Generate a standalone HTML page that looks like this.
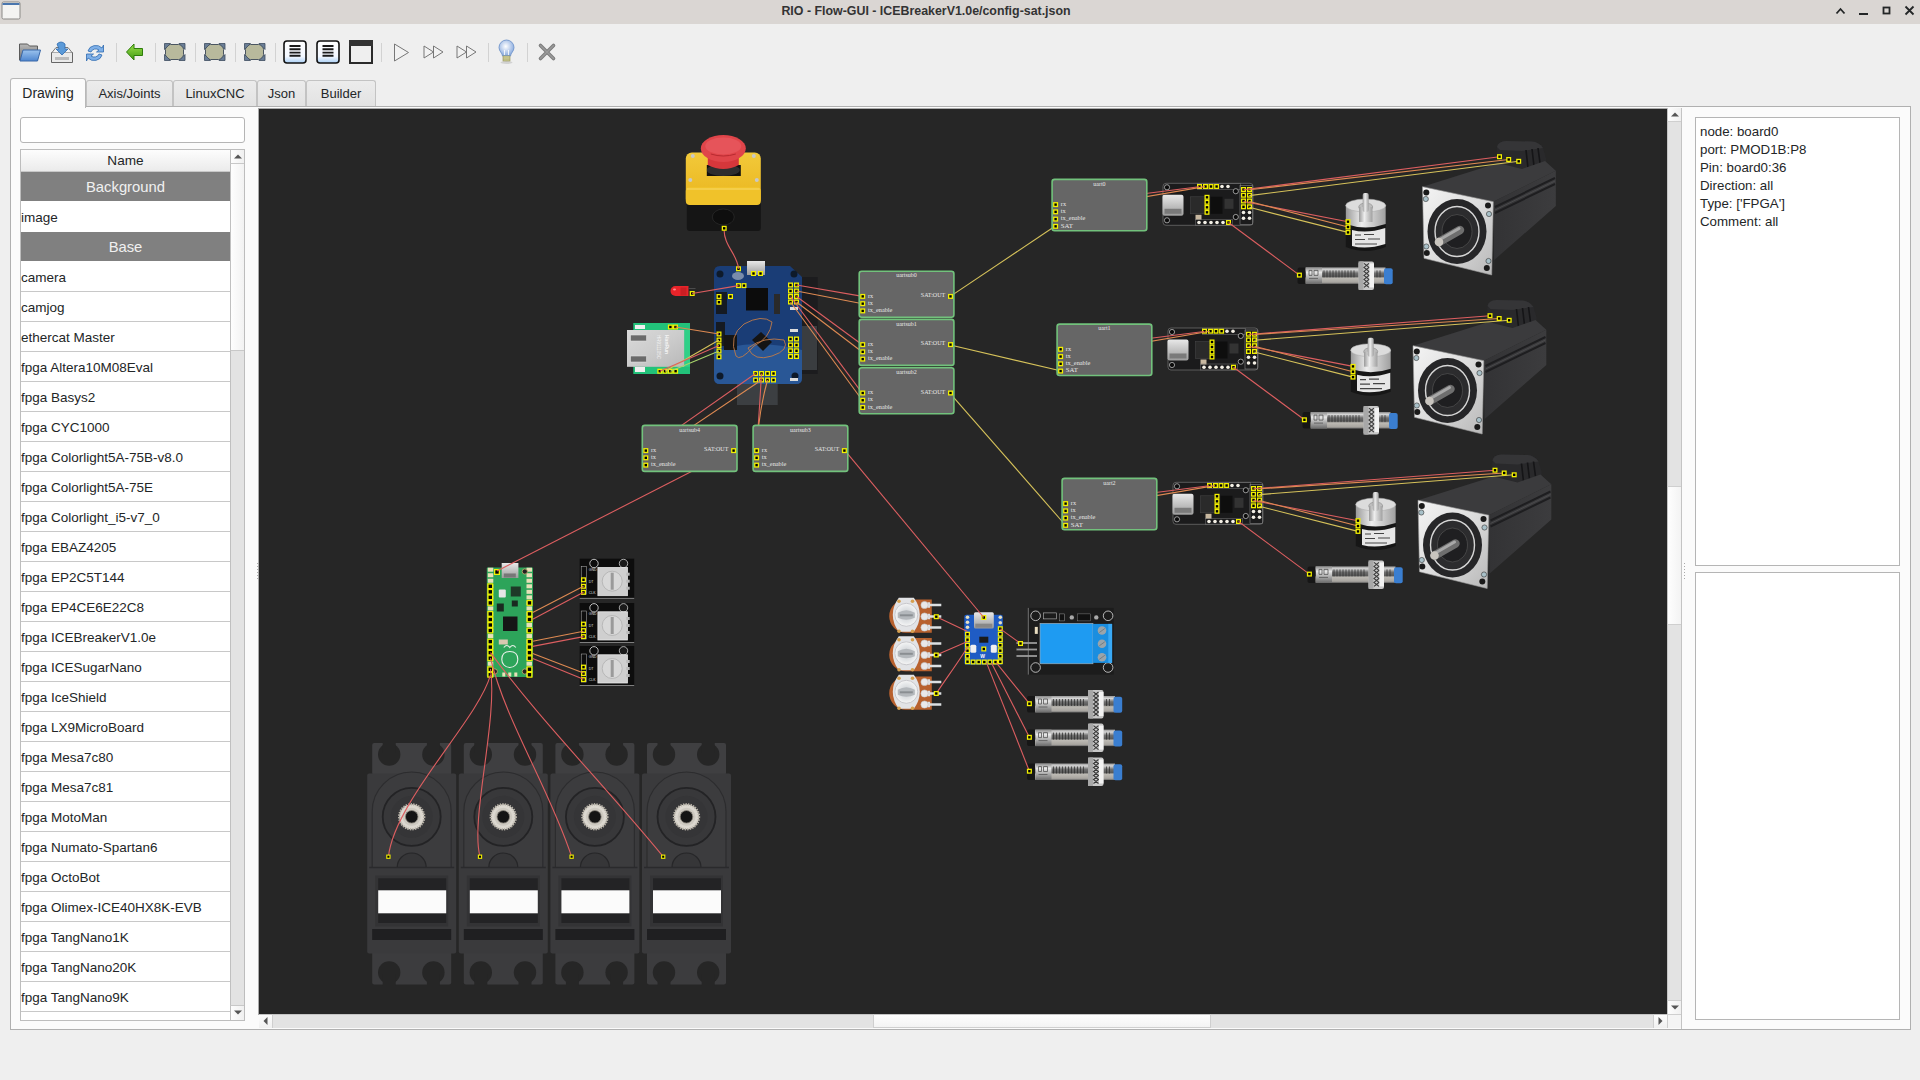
<!DOCTYPE html>
<html><head><meta charset="utf-8">
<style>
*{margin:0;padding:0;box-sizing:border-box}
html,body{width:1920px;height:1080px;overflow:hidden;background:#efefef;font-family:"Liberation Sans",sans-serif;color:#232627}
.a{position:absolute}
#title{left:0;top:0;width:1920px;height:24px;background:#dad6d3}
#ttext{left:0;top:0;width:1852px;text-align:center;font-size:12.4px;line-height:22px;font-weight:bold;color:#333}
.tab{top:80px;height:27px;background:linear-gradient(#ececec,#e2e2e2);border:1px solid #c3c3c3;border-bottom:none;font-size:13px;line-height:26px;text-align:center;color:#232627;border-radius:3px 3px 0 0}
#panel{left:10px;top:106px;width:1901px;height:924px;background:#fbfbfb;border:1px solid #b0b0b0}
.sep{top:43px;width:1px;height:20px;background:#d4d4d4}
#search{left:20px;top:117px;width:225px;height:26px;background:#fff;border:1px solid #b5b5b5;border-radius:3px}
#table{left:20px;top:149px;width:225px;height:872px;background:#fff;border:1px solid #bdbdbd;overflow:hidden}
.row{position:absolute;left:0;width:209px;height:30px;border-bottom:1px solid #c8c8c8;font-size:13.5px;line-height:32px;padding-left:0;color:#232627;background:#fff}
.grp{background:#808080;color:#f0f0f0;text-align:center;font-size:14.8px;line-height:31px;border-bottom:1px solid #fff}
#canvas{left:258px;top:108px;width:1410px;height:907px;background:#262626;border:1px solid #aaa;border-right:none;border-bottom:none;overflow:hidden}
.hdr{position:absolute;left:0;top:0;width:209px;height:22px;background:linear-gradient(#fdfdfd,#ebebeb);border-bottom:1px solid #c8c8c8;text-align:center;font-size:13.6px;line-height:22px;color:#232627}
#info{left:1695px;top:117px;width:205px;height:449px;background:#fff;border:1px solid #b5b5b5;font-size:13.3px;line-height:18px;padding:5px 0 0 4px;color:#232627}
#info2{left:1695px;top:572px;width:205px;height:448px;background:#fff;border:1px solid #b5b5b5}
.sb{background:#e3e3e3}
.btn{background:linear-gradient(90deg,#fdfdfd,#f0f0f0)}
</style></head><body>
<div id="title" class="a">
  <svg class="a" style="left:0;top:0" width="24" height="24"><rect x="2" y="2" width="18" height="17" rx="1.5" fill="#f4f4f2" stroke="#8a8986" stroke-width="1"/><rect x="2.5" y="3" width="17" height="2" fill="#4a76ae"/></svg>
  <div id="ttext" class="a">RIO - Flow-GUI - ICEBreakerV1.0e/config-sat.json</div>
  <svg class="a" style="left:1830px;top:0" width="90" height="24">
    <path d="M6.5 13.5 L10.5 9 L14.5 13.5" stroke="#232627" stroke-width="1.8" fill="none"/>
    <rect x="29" y="13" width="9" height="2" fill="#232627"/>
    <rect x="53.5" y="7.5" width="6" height="6" stroke="#232627" stroke-width="1.8" fill="none"/>
    <path d="M75.5 6.5 L83.5 14.5 M83.5 6.5 L75.5 14.5" stroke="#232627" stroke-width="1.8" fill="none"/>
  </svg>
</div>
<!-- TOOLBAR -->
<svg class="a" style="left:0;top:24px" width="580" height="56">
<defs>
<linearGradient id="gfold" x1="0" y1="0" x2="0" y2="1"><stop offset="0" stop-color="#b9b9b9"/><stop offset="1" stop-color="#6f6f6f"/></linearGradient>
<linearGradient id="gblue" x1="0" y1="0" x2="0" y2="1"><stop offset="0" stop-color="#9cc3ee"/><stop offset="1" stop-color="#4e86cf"/></linearGradient>
<linearGradient id="ggreen" x1="0" y1="0" x2="0" y2="1"><stop offset="0" stop-color="#9be04a"/><stop offset="1" stop-color="#3f9a12"/></linearGradient>
<linearGradient id="gdoc" x1="0" y1="0" x2="0" y2="1"><stop offset="0" stop-color="#ffffff"/><stop offset="0.7" stop-color="#f4f8ff"/><stop offset="1" stop-color="#a9cff5"/></linearGradient>
<radialGradient id="gbulb" cx="0.45" cy="0.4" r="0.6"><stop offset="0" stop-color="#ffffff"/><stop offset="1" stop-color="#87a9de"/></radialGradient>
</defs>
<!-- folder -->
<path d="M19.5 20 h8 l2 2 h8 v14 h-18z" fill="url(#gfold)" stroke="#5a5a5a" stroke-width="1"/>
<path d="M20 37 l3 -11 h17.5 l-3 11z" fill="url(#gblue)" stroke="#3a68a8" stroke-width="1"/>
<!-- save -->
<path d="M51.5 28.5 h21 v10 h-21z" fill="#eaeaea" stroke="#666" stroke-width="1"/>
<path d="M52 28.5 l4 -5 h12 l4 5" fill="#f4f4f4" stroke="#777" stroke-width="1"/>
<rect x="55" y="33" width="14" height="3" fill="#bbb"/>
<path d="M57 20 q4 -4 8 0 v5 h3 l-6 6 l-6 -6 h3z" fill="#5b9ad8" stroke="#2f6bb0" stroke-width="0.8"/>
<!-- refresh -->
<path d="M88 27 a8 7 0 0 1 14 -3 l1.5 -3 v7 h-7 l2.5 -2 a5 4.5 0 0 0 -8 2z" fill="#7fb0e8" stroke="#2f6bb0" stroke-width="0.8"/>
<path d="M102 31 a8 7 0 0 1 -14 3 l-1.5 3 v-7 h7 l-2.5 2 a5 4.5 0 0 0 8 -2z" fill="#7fb0e8" stroke="#2f6bb0" stroke-width="0.8"/>
<rect x="116" y="19" width="1" height="19" fill="#d2d2d2"/>
<!-- green arrow -->
<path d="M126.5 28 l7.5 -8 v4.5 h8.5 v7 h-8.5 v4.5z" fill="url(#ggreen)" stroke="#2e7d0a" stroke-width="1"/>
<rect x="155" y="19" width="1" height="19" fill="#d2d2d2"/>
<!-- 3 shape icons -->
<g id="shp"><rect x="165.5" y="20.5" width="18" height="15" rx="5" fill="#b8b99c" stroke="#4a5560" stroke-width="1"/>
<path d="M164.5 19.5 h6 l-6 6z M185 19.5 h-6 l6 6z M164.5 36.5 h6 l-6 -6z M185 36.5 h-6 l6 -6z" fill="#6a7d95" stroke="#3e4d60" stroke-width="0.8" stroke-linejoin="round"/></g>
<rect x="195" y="19" width="1" height="19" fill="#d2d2d2"/>
<use href="#shp" x="40"/>
<rect x="235" y="19" width="1" height="19" fill="#d2d2d2"/>
<use href="#shp" x="80"/>
<rect x="275" y="19" width="1" height="19" fill="#d2d2d2"/>
<!-- doc icons -->
<rect x="284" y="17" width="22" height="22" rx="3" fill="url(#gdoc)" stroke="#111" stroke-width="1.6"/>
<path d="M289.5 22 h11 M289.5 25.3 h11 M289.5 28.6 h11 M289.5 31.8 h11" stroke="#1a1a1a" stroke-width="1.9"/>
<rect x="317" y="17" width="22" height="22" rx="3" fill="url(#gdoc)" stroke="#111" stroke-width="1.6"/>
<path d="M322.5 22 h11 M322.5 25.3 h11 M322.5 28.6 h11 M322.5 31.8 h11" stroke="#1a1a1a" stroke-width="1.9"/>
<rect x="350" y="17" width="22" height="22" fill="#efefef" stroke="#2b2b2b" stroke-width="2"/>
<rect x="349" y="16" width="24" height="6" fill="#333"/>
<rect x="381" y="19" width="1" height="19" fill="#d2d2d2"/>
<!-- play -->
<path d="M394.5 20 l14 8.5 l-14 8.5z" fill="#f2f2f2" stroke="#777" stroke-width="1"/>
<path d="M424 22 l9.5 6 l-9.5 6z M433.5 22 l9.5 6 l-9.5 6z" fill="#f2f2f2" stroke="#777" stroke-width="1"/>
<path d="M457 22 l9.5 6 l-9.5 6z M466.5 22 l9.5 6 l-9.5 6z" fill="#f2f2f2" stroke="#777" stroke-width="1"/>
<rect x="488" y="19" width="1" height="19" fill="#d2d2d2"/>
<!-- bulb -->
<ellipse cx="506.5" cy="38.5" rx="6" ry="1.5" fill="#000" opacity="0.12"/>
<path d="M502.5 32 C502.5 29 499 27.5 499 23.5 A7.5 7.5 0 0 1 514 23.5 C514 27.5 510.5 29 510.5 32 Z" fill="url(#gbulb)" stroke="#7396cc" stroke-width="0.9"/>
<path d="M504.5 26 v5 M508.5 26 v5" stroke="#fff" stroke-width="0.8"/>
<rect x="503" y="32" width="7" height="5" fill="#d9d8a0" stroke="#8f8c50" stroke-width="0.6"/>
<path d="M503 34 h7 M503 35.8 h7" stroke="#9a9860" stroke-width="0.6"/>
<rect x="527" y="19" width="1" height="19" fill="#d2d2d2"/>
<!-- X -->
<path d="M540.5 21.5 l13 13 M553.5 21.5 l-13 13" stroke="#7b7b7b" stroke-width="3.6" stroke-linecap="round"/>
<path d="M540.5 21.5 l13 13 M553.5 21.5 l-13 13" stroke="#9a9a9a" stroke-width="1.6" stroke-linecap="round"/>
</svg>
<!-- TABS -->
<div class="a tab" style="left:86px;width:87px">Axis/Joints</div>
<div class="a tab" style="left:173px;width:84px">LinuxCNC</div>
<div class="a tab" style="left:257px;width:49px">Json</div>
<div class="a tab" style="left:306px;width:70px">Builder</div>
<div id="panel" class="a"></div>
<div class="a tab" style="left:10px;top:78px;width:76px;height:30px;background:#fbfbfb;border-color:#b8b8b8;line-height:29px;font-size:14px">Drawing</div>
<div id="search" class="a"></div>
<div id="table" class="a">
<div class="hdr">Name</div>
<div class="row grp" style="top:22px">Background</div>
<div class="row" style="top:52px;border-bottom:none">image</div>
<div class="row grp" style="top:82px">Base</div>
<div class="row" style="top:112px">camera</div>
<div class="row" style="top:142px">camjog</div>
<div class="row" style="top:172px">ethercat Master</div>
<div class="row" style="top:202px">fpga Altera10M08Eval</div>
<div class="row" style="top:232px">fpga Basys2</div>
<div class="row" style="top:262px">fpga CYC1000</div>
<div class="row" style="top:292px">fpga Colorlight5A-75B-v8.0</div>
<div class="row" style="top:322px">fpga Colorlight5A-75E</div>
<div class="row" style="top:352px">fpga Colorlight_i5-v7_0</div>
<div class="row" style="top:382px">fpga EBAZ4205</div>
<div class="row" style="top:412px">fpga EP2C5T144</div>
<div class="row" style="top:442px">fpga EP4CE6E22C8</div>
<div class="row" style="top:472px">fpga ICEBreakerV1.0e</div>
<div class="row" style="top:502px">fpga ICESugarNano</div>
<div class="row" style="top:532px">fpga IceShield</div>
<div class="row" style="top:562px">fpga LX9MicroBoard</div>
<div class="row" style="top:592px">fpga Mesa7c80</div>
<div class="row" style="top:622px">fpga Mesa7c81</div>
<div class="row" style="top:652px">fpga MotoMan</div>
<div class="row" style="top:682px">fpga Numato-Spartan6</div>
<div class="row" style="top:712px">fpga OctoBot</div>
<div class="row" style="top:742px">fpga Olimex-ICE40HX8K-EVB</div>
<div class="row" style="top:772px">fpga TangNano1K</div>
<div class="row" style="top:802px">fpga TangNano20K</div>
<div class="row" style="top:832px">fpga TangNano9K</div>
<div class="row" style="top:862px"></div>
<div class="a" style="left:209px;top:0;width:14px;height:870px;background:#e3e3e3;border-left:1px solid #c0c0c0"></div>
<div class="a" style="left:209px;top:0;width:14px;height:14px;background:linear-gradient(90deg,#fdfdfd,#f0f0f0);border-left:1px solid #c0c0c0;border-bottom:1px solid #c8c8c8"><svg class="a" style="left:3px;top:4px" width="8" height="5"><path d="M0 4.5 L4 0.5 L8 4.5Z" fill="#555"/></svg></div>
<div class="a" style="left:209px;top:14px;width:14px;height:187px;background:linear-gradient(90deg,#fefefe,#f2f2f2);border-left:1px solid #c0c0c0;border-bottom:1px solid #c8c8c8"></div>
<div class="a" style="left:209px;top:855px;width:14px;height:15px;background:linear-gradient(90deg,#fdfdfd,#f0f0f0);border-left:1px solid #c0c0c0;border-top:1px solid #c8c8c8"><svg class="a" style="left:3px;top:4px" width="8" height="5"><path d="M0 0.5 L4 4.5 L8 0.5Z" fill="#555"/></svg></div>
</div>
<div id="canvas" class="a"></div>
<svg class="a" style="left:259px;top:109px" width="1408" height="905" viewBox="259 109 1408 905">
<defs>
<linearGradient id="silv" x1="0" y1="0" x2="1" y2="1"><stop offset="0" stop-color="#f4f4f4"/><stop offset="0.5" stop-color="#dcdcdc"/><stop offset="1" stop-color="#b8b8b8"/></linearGradient>
<linearGradient id="silvV" x1="0" y1="0" x2="0" y2="1"><stop offset="0" stop-color="#8a8a8a"/><stop offset="0.3" stop-color="#e8e8e8"/><stop offset="0.6" stop-color="#b0b0b0"/><stop offset="1" stop-color="#6a6a6a"/></linearGradient>
<linearGradient id="silvH" x1="0" y1="0" x2="1" y2="0"><stop offset="0" stop-color="#9a9a9a"/><stop offset="0.4" stop-color="#eeeeee"/><stop offset="1" stop-color="#a0a0a0"/></linearGradient>
<linearGradient id="usb" x1="0" y1="0" x2="0" y2="1"><stop offset="0" stop-color="#e8e8e8"/><stop offset="1" stop-color="#9c9c9c"/></linearGradient>
<linearGradient id="yellowbox" x1="0" y1="0" x2="0" y2="1"><stop offset="0" stop-color="#f2c93a"/><stop offset="1" stop-color="#e9b51d"/></linearGradient>
<linearGradient id="motside" x1="0" y1="0" x2="1" y2="0"><stop offset="0" stop-color="#333335"/><stop offset="1" stop-color="#3c3c3e"/></linearGradient>
<linearGradient id="proxg" x1="0" y1="0" x2="0" y2="1"><stop offset="0" stop-color="#9a9a9a"/><stop offset="0.15" stop-color="#d6d6d6"/><stop offset="0.35" stop-color="#707070"/><stop offset="0.55" stop-color="#5a5a5a"/><stop offset="0.65" stop-color="#bdbab4"/><stop offset="0.9" stop-color="#a8a5a0"/><stop offset="1" stop-color="#6a6a6a"/></linearGradient>
<radialGradient id="gear" cx="0.5" cy="0.5" r="0.5"><stop offset="0.4" stop-color="#222"/><stop offset="0.5" stop-color="#d8d2c8"/><stop offset="1" stop-color="#a8a298"/></radialGradient>
<radialGradient id="potknob" cx="0.5" cy="0.5" r="0.5"><stop offset="0" stop-color="#c8ccd0"/><stop offset="0.7" stop-color="#e6e8ea"/><stop offset="1" stop-color="#f6f6f6"/></radialGradient>
</defs>
<g transform="translate(685.8,135)">
<rect x="1" y="66" width="74" height="30" rx="3" fill="#151515"/>
<ellipse cx="37.5" cy="82" rx="11" ry="8" fill="#0e0e0e" stroke="#2a2a2a" stroke-width="0.8"/>
<rect x="0" y="17.5" width="75" height="52.5" rx="6" fill="url(#yellowbox)"/>
<rect x="0" y="52" width="75" height="18" rx="4" fill="#f0c22a"/>
<path d="M1,54 H74" stroke="#f8da6a" stroke-width="1"/>
<circle cx="7" cy="21" r="2" fill="#c8c8c8"/><circle cx="68" cy="21" r="2" fill="#c8c8c8"/><circle cx="4.5" cy="45" r="2" fill="#c8c8c8"/><circle cx="71" cy="45" r="2" fill="#c8c8c8"/>
<rect x="21" y="30" width="34" height="11" fill="#111"/>
<ellipse cx="37.5" cy="35" rx="16.5" ry="6" fill="#2e2e2e"/>
<path d="M22,14 L22,30 Q37.5,38 53,30 L53,14 Z" fill="#d6373b"/>
<ellipse cx="37.5" cy="13.5" rx="22.5" ry="13.5" fill="#e0454a"/>
<ellipse cx="37.5" cy="11" rx="18" ry="8.5" fill="#e6545a"/>
<path d="M25,19 Q37.5,23 50,19" stroke="#b82a30" stroke-width="1" fill="none"/>
</g>
<g transform="translate(714,266)">
<rect x="83" y="11" width="20.7" height="97" fill="#1c1c1e"/>
<rect x="84" y="60" width="19" height="44" fill="#3a3d40"/>
<rect x="23" y="110" width="40.7" height="29" fill="#3c3f42"/>
<path d="M6,0 H76 L88,11 V112 Q88,118 82,118 H6 Q0,118 0,112 V6 Q0,0 6,0 Z" fill="#1a3d76"/>
<path d="M0,88 Q30,70 88,84 V112 Q88,118 82,118 H6 Q0,118 0,112 Z" fill="#2d5c9c" opacity="0.85"/>
<rect x="2" y="26" width="11" height="22" fill="#151a22"/>
<rect x="2" y="56" width="9" height="24" fill="#151a22"/>
<rect x="10" y="69" width="13" height="15" fill="#151515"/>
<rect x="33" y="-5" width="18" height="14" fill="url(#usb)"/>
<rect x="32" y="22" width="22" height="22.5" fill="#0c0c0c"/>
<rect x="60" y="28" width="6" height="20" fill="#2a2a2a"/>
<path d="M38,74 L47,66 L58,76 L49,85 Z" fill="#141414"/>
<path d="M22,90 Q14,70 30,58 Q48,48 58,56 Q56,72 40,80 Q26,96 22,90 Z" fill="none" stroke="#c07a48" stroke-width="0.9"/>
<path d="M34,82 Q50,70 70,74 Q76,84 58,90 Q40,96 34,82 Z" fill="none" stroke="#c07a48" stroke-width="0.9"/>
<circle cx="6" cy="8" r="3.5" fill="#0e1a2a"/><circle cx="80" cy="8" r="3.5" fill="#0e1a2a"/><circle cx="6" cy="110" r="3.5" fill="#0e1a2a"/><circle cx="81" cy="110" r="3.5" fill="#0e1a2a"/>
<ellipse cx="24" cy="10" rx="6" ry="4" fill="#c8d0d8" opacity="0.55"/>
<rect x="76" y="63" width="8" height="3" fill="#ddd"/><rect x="76" y="41" width="8" height="3" fill="#ddd"/><rect x="76" y="112" width="8" height="3" fill="#ddd"/>
</g>
<rect x="736.65" y="266.95" width="3.70" height="3.70" fill="#000" stroke="#f2f000" stroke-width="1.3"/>
<rect x="751.65" y="271.65" width="3.70" height="3.70" fill="#000" stroke="#f2f000" stroke-width="1.3"/>
<rect x="758.65" y="271.65" width="3.70" height="3.70" fill="#000" stroke="#f2f000" stroke-width="1.3"/>
<rect x="736.65" y="283.75" width="3.70" height="3.70" fill="#000" stroke="#f2f000" stroke-width="1.3"/>
<rect x="742.15" y="283.75" width="3.70" height="3.70" fill="#000" stroke="#f2f000" stroke-width="1.3"/>
<rect x="717.15" y="294.65" width="3.70" height="3.70" fill="#000" stroke="#f2f000" stroke-width="1.3"/>
<rect x="717.15" y="300.35" width="3.70" height="3.70" fill="#000" stroke="#f2f000" stroke-width="1.3"/>
<rect x="728.65" y="294.65" width="3.70" height="3.70" fill="#000" stroke="#f2f000" stroke-width="1.3"/>
<rect x="788.65" y="283.15" width="3.70" height="3.70" fill="#000" stroke="#f2f000" stroke-width="1.3"/>
<rect x="794.65" y="283.15" width="3.70" height="3.70" fill="#000" stroke="#f2f000" stroke-width="1.3"/>
<rect x="788.65" y="289.15" width="3.70" height="3.70" fill="#000" stroke="#f2f000" stroke-width="1.3"/>
<rect x="794.65" y="289.15" width="3.70" height="3.70" fill="#000" stroke="#f2f000" stroke-width="1.3"/>
<rect x="788.65" y="294.65" width="3.70" height="3.70" fill="#000" stroke="#f2f000" stroke-width="1.3"/>
<rect x="794.65" y="294.65" width="3.70" height="3.70" fill="#000" stroke="#f2f000" stroke-width="1.3"/>
<rect x="788.65" y="300.15" width="3.70" height="3.70" fill="#000" stroke="#f2f000" stroke-width="1.3"/>
<rect x="794.65" y="300.15" width="3.70" height="3.70" fill="#000" stroke="#f2f000" stroke-width="1.3"/>
<rect x="788.65" y="337.15" width="3.70" height="3.70" fill="#000" stroke="#f2f000" stroke-width="1.3"/>
<rect x="794.65" y="337.15" width="3.70" height="3.70" fill="#000" stroke="#f2f000" stroke-width="1.3"/>
<rect x="788.65" y="343.15" width="3.70" height="3.70" fill="#000" stroke="#f2f000" stroke-width="1.3"/>
<rect x="794.65" y="343.15" width="3.70" height="3.70" fill="#000" stroke="#f2f000" stroke-width="1.3"/>
<rect x="788.65" y="348.95" width="3.70" height="3.70" fill="#000" stroke="#f2f000" stroke-width="1.3"/>
<rect x="794.65" y="348.95" width="3.70" height="3.70" fill="#000" stroke="#f2f000" stroke-width="1.3"/>
<rect x="788.65" y="354.65" width="3.70" height="3.70" fill="#000" stroke="#f2f000" stroke-width="1.3"/>
<rect x="794.65" y="354.65" width="3.70" height="3.70" fill="#000" stroke="#f2f000" stroke-width="1.3"/>
<rect x="717.15" y="332.15" width="3.70" height="3.70" fill="#000" stroke="#f2f000" stroke-width="1.3"/>
<rect x="717.15" y="338.15" width="3.70" height="3.70" fill="#000" stroke="#f2f000" stroke-width="1.3"/>
<rect x="717.15" y="343.75" width="3.70" height="3.70" fill="#000" stroke="#f2f000" stroke-width="1.3"/>
<rect x="717.15" y="349.15" width="3.70" height="3.70" fill="#000" stroke="#f2f000" stroke-width="1.3"/>
<rect x="717.15" y="354.95" width="3.70" height="3.70" fill="#000" stroke="#f2f000" stroke-width="1.3"/>
<rect x="753.75" y="371.65" width="3.70" height="3.70" fill="#000" stroke="#f2f000" stroke-width="1.3"/>
<rect x="753.75" y="378.15" width="3.70" height="3.70" fill="#000" stroke="#f2f000" stroke-width="1.3"/>
<rect x="759.65" y="371.65" width="3.70" height="3.70" fill="#000" stroke="#f2f000" stroke-width="1.3"/>
<rect x="759.65" y="378.15" width="3.70" height="3.70" fill="#000" stroke="#f2f000" stroke-width="1.3"/>
<rect x="765.65" y="371.65" width="3.70" height="3.70" fill="#000" stroke="#f2f000" stroke-width="1.3"/>
<rect x="765.65" y="378.15" width="3.70" height="3.70" fill="#000" stroke="#f2f000" stroke-width="1.3"/>
<rect x="771.65" y="371.65" width="3.70" height="3.70" fill="#000" stroke="#f2f000" stroke-width="1.3"/>
<rect x="771.65" y="378.15" width="3.70" height="3.70" fill="#000" stroke="#f2f000" stroke-width="1.3"/>
<g transform="translate(627,323)">
<rect x="6.3" y="0" width="56.7" height="51" fill="#22c27a"/>
<rect x="8" y="2" width="10" height="4" fill="#f0f0f0"/><rect x="8" y="44" width="10" height="5" fill="#f0f0f0"/>
<rect x="0" y="7" width="57.4" height="36.7" fill="#b9b9b9"/>
<rect x="0" y="7" width="57.4" height="36.7" fill="url(#silv)" opacity="0.55"/>
<rect x="3.5" y="12" width="16" height="6" fill="#6a6a6a" stroke="#e0e0e0" stroke-width="0.6"/>
<rect x="3.5" y="33" width="16" height="6" fill="#6a6a6a" stroke="#e0e0e0" stroke-width="0.6"/>
<text transform="translate(38,12) rotate(90)" font-family="Liberation Sans" font-size="5" fill="#f4f4f4" font-weight="bold">HanRun</text>
<text transform="translate(30,12) rotate(90)" font-family="Liberation Sans" font-size="4.5" fill="#f4f4f4">HR911105C</text>
<rect x="57.4" y="7" width="5.6" height="36.7" fill="#30d088"/>
</g>
<rect x="668.55" y="325.15" width="3.70" height="3.70" fill="#000" stroke="#f2f000" stroke-width="1.3"/>
<rect x="673.65" y="325.15" width="3.70" height="3.70" fill="#000" stroke="#f2f000" stroke-width="1.3"/>
<rect x="657.95" y="369.35" width="3.70" height="3.70" fill="#000" stroke="#f2f000" stroke-width="1.3"/>
<rect x="663.15" y="369.35" width="3.70" height="3.70" fill="#000" stroke="#f2f000" stroke-width="1.3"/>
<rect x="668.45" y="369.35" width="3.70" height="3.70" fill="#000" stroke="#f2f000" stroke-width="1.3"/>
<rect x="673.75" y="369.35" width="3.70" height="3.70" fill="#000" stroke="#f2f000" stroke-width="1.3"/>
<g transform="translate(670.5,285.5)">
<path d="M5,0.5 H18 V10.5 H5 A5,5 0 0 1 5,0.5 Z" fill="#e8242a"/>
<rect x="10" y="2" width="6" height="8" fill="#b81a20" opacity="0.6"/>
<ellipse cx="4" cy="4" rx="1.5" ry="1" fill="#ff8a8a"/>
<path d="M18,3 H25" stroke="#555" stroke-width="0.8"/>
</g>
<rect x="690.35" y="291.65" width="3.70" height="3.70" fill="#000" stroke="#f2f000" stroke-width="1.3"/>
<g transform="translate(1162.5,182.8)">
<rect x="0.5" y="0.5" width="90" height="42" rx="3" fill="#1b1b1c" stroke="#6a6a6a" stroke-width="0.8"/>
<rect x="0" y="12" width="21" height="21" rx="2" fill="url(#usb)"/>
<rect x="2" y="26" width="17" height="5" fill="#7a7a7a"/>
<rect x="28" y="14" width="15" height="17" fill="#2a2a2a" stroke="#444" stroke-width="0.6"/>
<rect x="48" y="14" width="12" height="17" fill="#0e0e0e"/>
<rect x="62" y="16" width="9" height="10" fill="#333"/>
<rect x="33" y="32" width="6" height="5" fill="#c8b8a0"/>
<rect x="35" y="0.8" width="43" height="6" fill="none" stroke="#777" stroke-width="0.5"/>
<rect x="77.5" y="2.5" width="12.5" height="39" fill="none" stroke="#888" stroke-width="0.6"/>
<rect x="33" y="36.5" width="37" height="6" fill="none" stroke="#777" stroke-width="0.5"/>
<circle cx="4.5" cy="4.5" r="2.6" fill="#0a0a0a" stroke="#cfcfcf" stroke-width="0.7"/>
<circle cx="4.5" cy="37.5" r="2.6" fill="#0a0a0a" stroke="#cfcfcf" stroke-width="0.7"/>
<circle cx="73.3" cy="8.4" r="2.6" fill="#0a0a0a" stroke="#cfcfcf" stroke-width="0.7"/>
<circle cx="73.3" cy="34.2" r="2.6" fill="#0a0a0a" stroke="#cfcfcf" stroke-width="0.7"/>
<circle cx="59.5" cy="3.7" r="1.8" fill="#f4f0e6"/>
<circle cx="65.5" cy="3.7" r="1.8" fill="#f4f0e6"/>
<circle cx="81" cy="29.7" r="1.8" fill="#f4f0e6"/>
<circle cx="87" cy="29.7" r="1.8" fill="#f4f0e6"/>
<circle cx="81" cy="35.5" r="1.8" fill="#f4f0e6"/>
<circle cx="87" cy="35.5" r="1.8" fill="#f4f0e6"/>
<circle cx="36.5" cy="39.7" r="1.8" fill="#f4f0e6"/>
<circle cx="42.5" cy="39.7" r="1.8" fill="#f4f0e6"/>
<circle cx="48.5" cy="39.7" r="1.8" fill="#f4f0e6"/>
<circle cx="54.5" cy="39.7" r="1.8" fill="#f4f0e6"/>
<circle cx="60.5" cy="39.7" r="1.8" fill="#f4f0e6"/>
</g>
<rect x="1197.65" y="184.65" width="3.70" height="3.70" fill="#000" stroke="#f2f000" stroke-width="1.3"/>
<rect x="1203.65" y="184.65" width="3.70" height="3.70" fill="#000" stroke="#f2f000" stroke-width="1.3"/>
<rect x="1209.15" y="184.65" width="3.70" height="3.70" fill="#000" stroke="#f2f000" stroke-width="1.3"/>
<rect x="1214.75" y="184.65" width="3.70" height="3.70" fill="#000" stroke="#f2f000" stroke-width="1.3"/>
<rect x="1241.65" y="187.65" width="3.70" height="3.70" fill="#000" stroke="#f2f000" stroke-width="1.3"/>
<rect x="1247.65" y="187.65" width="3.70" height="3.70" fill="#000" stroke="#f2f000" stroke-width="1.3"/>
<rect x="1241.65" y="193.35" width="3.70" height="3.70" fill="#000" stroke="#f2f000" stroke-width="1.3"/>
<rect x="1247.65" y="193.35" width="3.70" height="3.70" fill="#000" stroke="#f2f000" stroke-width="1.3"/>
<rect x="1241.65" y="199.15" width="3.70" height="3.70" fill="#000" stroke="#f2f000" stroke-width="1.3"/>
<rect x="1247.65" y="199.15" width="3.70" height="3.70" fill="#000" stroke="#f2f000" stroke-width="1.3"/>
<rect x="1241.65" y="204.95" width="3.70" height="3.70" fill="#000" stroke="#f2f000" stroke-width="1.3"/>
<rect x="1247.65" y="204.95" width="3.70" height="3.70" fill="#000" stroke="#f2f000" stroke-width="1.3"/>
<rect x="1205.15" y="195.45" width="3.70" height="3.70" fill="#000" stroke="#f2f000" stroke-width="1.3"/>
<rect x="1205.15" y="200.45" width="3.70" height="3.70" fill="#000" stroke="#f2f000" stroke-width="1.3"/>
<rect x="1205.15" y="205.45" width="3.70" height="3.70" fill="#000" stroke="#f2f000" stroke-width="1.3"/>
<rect x="1205.15" y="210.45" width="3.70" height="3.70" fill="#000" stroke="#f2f000" stroke-width="1.3"/>
<rect x="1226.65" y="220.65" width="3.70" height="3.70" fill="#000" stroke="#f2f000" stroke-width="1.3"/>
<g transform="translate(1345,193)">
<path d="M0.8,12 L0.8,54 Q20.7,62 40.7,54 L40.7,12 Z" fill="#161616"/>
<path d="M0.8,12 L0.8,31 Q20.7,38 40.7,31 L40.7,12 Z" fill="url(#silvH)"/>
<path d="M7,37 Q22,41 40.3,35 L40.3,51 Q22,57 7,53 Z" fill="#e6e6e6"/>
<ellipse cx="20.7" cy="12.5" rx="20" ry="6.5" fill="#dcdcdc" stroke="#aaa" stroke-width="0.5"/>
<ellipse cx="20.7" cy="14" rx="7" ry="4" fill="#bdbdbd" stroke="#888" stroke-width="0.6"/>
<rect x="14" y="14" width="13.5" height="15" fill="url(#silvH)"/>
<rect x="17.7" y="0" width="6" height="19" rx="2" fill="url(#silvH)"/>
<path d="M10,42 h6 M19,41.5 h10 M10,46.5 h10 M23,46 h12 M10,51 h22" stroke="#444" stroke-width="1.2"/>
</g>
<g transform="translate(1297,261.4)">
<rect x="0.5" y="6" width="9" height="16.5" rx="2" fill="#161616"/>
<rect x="8.5" y="6" width="80" height="16.5" fill="url(#proxg)"/>
<path d="M27,9 v7 M30,9 v7 M33,9 v7 M36,9 v7 M39,9 v7 M42,9 v7 M45,9 v7 M48,9 v7 M51,9 v7 M54,9 v7 M57,9 v7 M80,9 v7 M83,9 v7" stroke="#2e2e2e" stroke-width="0.9" opacity="0.8"/>
<rect x="9" y="6" width="16" height="16.5" fill="url(#silvV)"/>
<path d="M12,9 h3 v5 h-3z M17,9 h4 v5 h-4z M12,17 h9" stroke="#555" stroke-width="0.8" fill="none"/>
<rect x="61.5" y="0" width="15.5" height="28.5" rx="2" fill="#c8c8c8"/>
<rect x="61.5" y="0" width="5" height="28.5" fill="#a8a8a8"/>
<path d="M67,2 l5,4 l-5,4 l5,4 l-5,4 l5,4 l-5,4 M72,2 l-5,4 l5,4 l-5,4 l5,4 l-5,4 l5,4" stroke="#3a3a3a" stroke-width="1.1" fill="none"/>
<rect x="72.5" y="2" width="4.5" height="24" fill="#f2f2f2"/>
<rect x="87" y="6.8" width="8.7" height="16" rx="2" fill="#3a7ed0"/>
</g>
<g transform="translate(1422,141)">
<path d="M74,24 L75,6 Q76,0.5 84,0 L110,0.5 Q117,1 121,7 L124,17 L124,23 L100,30 Z" fill="#29292b"/>
<path d="M75,6 Q76,0.5 84,0 L110,0.5 Q117,1 121,7 L100,10 L78,9 Z" fill="#353537"/>
<path d="M104,9 L106,27 M110,8 L112,25 M116,7 L118,22" stroke="#151517" stroke-width="1.6" fill="none"/>
<path d="M0.5,45.7 L76,22 L100,28 L123,20 L133.8,29.8 L71.3,60.7 Z" fill="#3b3b3d"/>
<path d="M71.3,60.7 L133.8,29.8 L133.8,65 L72.2,119 L72.2,134 Z" fill="url(#motside)"/>
<path d="M73,66 L133,37 M73,72 L133,43" stroke="#1e1e20" stroke-width="2" fill="none"/>
<path d="M73,69 L133,40" stroke="#4a4a4c" stroke-width="1" fill="none"/>
<path d="M0.5,45.7 L71.3,60.7 L69.7,134 L2,117.3 Z" fill="url(#silv)" stroke="#9a9a9a" stroke-width="0.6"/>
<ellipse cx="35" cy="90.5" rx="29.5" ry="32.5" fill="#262628"/>
<ellipse cx="35" cy="90.5" rx="22" ry="25" fill="#2c2c2e" stroke="#d6d6d6" stroke-width="1.4"/>
<ellipse cx="35" cy="90.5" rx="15" ry="17" fill="#1f1f21" stroke="#5a5a5a" stroke-width="0.6"/>
<path d="M17,101 L38,89" stroke="#6e6e6e" stroke-width="8.5" stroke-linecap="round"/>
<path d="M18,98.5 L37,87.5" stroke="#a8a8a8" stroke-width="3" stroke-linecap="round"/>
<ellipse cx="17" cy="101" rx="4.3" ry="4.3" fill="#c9c5bf"/>
<circle cx="4.3" cy="51.5" r="3" fill="#1a1a1a"/>
<circle cx="66" cy="64.5" r="3" fill="#1a1a1a"/>
<circle cx="4.8" cy="112" r="3" fill="#1a1a1a"/>
<circle cx="64.8" cy="127" r="3" fill="#1a1a1a"/>
<circle cx="3.8" cy="58" r="2.6" fill="#a8c0c8" stroke="#333" stroke-width="0.6"/>
<circle cx="67" cy="73" r="2.6" fill="#a8c0c8" stroke="#333" stroke-width="0.6"/>
<circle cx="4.3" cy="105.5" r="2.6" fill="#a8c0c8" stroke="#333" stroke-width="0.6"/>
<circle cx="66.5" cy="120" r="2.6" fill="#a8c0c8" stroke="#333" stroke-width="0.6"/>
</g>
<g transform="translate(1167.5,327.5)">
<rect x="0.5" y="0.5" width="90" height="42" rx="3" fill="#1b1b1c" stroke="#6a6a6a" stroke-width="0.8"/>
<rect x="0" y="12" width="21" height="21" rx="2" fill="url(#usb)"/>
<rect x="2" y="26" width="17" height="5" fill="#7a7a7a"/>
<rect x="28" y="14" width="15" height="17" fill="#2a2a2a" stroke="#444" stroke-width="0.6"/>
<rect x="48" y="14" width="12" height="17" fill="#0e0e0e"/>
<rect x="62" y="16" width="9" height="10" fill="#333"/>
<rect x="33" y="32" width="6" height="5" fill="#c8b8a0"/>
<rect x="35" y="0.8" width="43" height="6" fill="none" stroke="#777" stroke-width="0.5"/>
<rect x="77.5" y="2.5" width="12.5" height="39" fill="none" stroke="#888" stroke-width="0.6"/>
<rect x="33" y="36.5" width="37" height="6" fill="none" stroke="#777" stroke-width="0.5"/>
<circle cx="4.5" cy="4.5" r="2.6" fill="#0a0a0a" stroke="#cfcfcf" stroke-width="0.7"/>
<circle cx="4.5" cy="37.5" r="2.6" fill="#0a0a0a" stroke="#cfcfcf" stroke-width="0.7"/>
<circle cx="73.3" cy="8.4" r="2.6" fill="#0a0a0a" stroke="#cfcfcf" stroke-width="0.7"/>
<circle cx="73.3" cy="34.2" r="2.6" fill="#0a0a0a" stroke="#cfcfcf" stroke-width="0.7"/>
<circle cx="59.5" cy="3.7" r="1.8" fill="#f4f0e6"/>
<circle cx="65.5" cy="3.7" r="1.8" fill="#f4f0e6"/>
<circle cx="81" cy="29.7" r="1.8" fill="#f4f0e6"/>
<circle cx="87" cy="29.7" r="1.8" fill="#f4f0e6"/>
<circle cx="81" cy="35.5" r="1.8" fill="#f4f0e6"/>
<circle cx="87" cy="35.5" r="1.8" fill="#f4f0e6"/>
<circle cx="36.5" cy="39.7" r="1.8" fill="#f4f0e6"/>
<circle cx="42.5" cy="39.7" r="1.8" fill="#f4f0e6"/>
<circle cx="48.5" cy="39.7" r="1.8" fill="#f4f0e6"/>
<circle cx="54.5" cy="39.7" r="1.8" fill="#f4f0e6"/>
<circle cx="60.5" cy="39.7" r="1.8" fill="#f4f0e6"/>
</g>
<rect x="1202.65" y="329.35" width="3.70" height="3.70" fill="#000" stroke="#f2f000" stroke-width="1.3"/>
<rect x="1208.65" y="329.35" width="3.70" height="3.70" fill="#000" stroke="#f2f000" stroke-width="1.3"/>
<rect x="1214.15" y="329.35" width="3.70" height="3.70" fill="#000" stroke="#f2f000" stroke-width="1.3"/>
<rect x="1219.75" y="329.35" width="3.70" height="3.70" fill="#000" stroke="#f2f000" stroke-width="1.3"/>
<rect x="1246.65" y="332.35" width="3.70" height="3.70" fill="#000" stroke="#f2f000" stroke-width="1.3"/>
<rect x="1252.65" y="332.35" width="3.70" height="3.70" fill="#000" stroke="#f2f000" stroke-width="1.3"/>
<rect x="1246.65" y="338.05" width="3.70" height="3.70" fill="#000" stroke="#f2f000" stroke-width="1.3"/>
<rect x="1252.65" y="338.05" width="3.70" height="3.70" fill="#000" stroke="#f2f000" stroke-width="1.3"/>
<rect x="1246.65" y="343.85" width="3.70" height="3.70" fill="#000" stroke="#f2f000" stroke-width="1.3"/>
<rect x="1252.65" y="343.85" width="3.70" height="3.70" fill="#000" stroke="#f2f000" stroke-width="1.3"/>
<rect x="1246.65" y="349.65" width="3.70" height="3.70" fill="#000" stroke="#f2f000" stroke-width="1.3"/>
<rect x="1252.65" y="349.65" width="3.70" height="3.70" fill="#000" stroke="#f2f000" stroke-width="1.3"/>
<rect x="1210.15" y="340.15" width="3.70" height="3.70" fill="#000" stroke="#f2f000" stroke-width="1.3"/>
<rect x="1210.15" y="345.15" width="3.70" height="3.70" fill="#000" stroke="#f2f000" stroke-width="1.3"/>
<rect x="1210.15" y="350.15" width="3.70" height="3.70" fill="#000" stroke="#f2f000" stroke-width="1.3"/>
<rect x="1210.15" y="355.15" width="3.70" height="3.70" fill="#000" stroke="#f2f000" stroke-width="1.3"/>
<rect x="1231.65" y="365.35" width="3.70" height="3.70" fill="#000" stroke="#f2f000" stroke-width="1.3"/>
<g transform="translate(1350,337.7)">
<path d="M0.8,12 L0.8,54 Q20.7,62 40.7,54 L40.7,12 Z" fill="#161616"/>
<path d="M0.8,12 L0.8,31 Q20.7,38 40.7,31 L40.7,12 Z" fill="url(#silvH)"/>
<path d="M7,37 Q22,41 40.3,35 L40.3,51 Q22,57 7,53 Z" fill="#e6e6e6"/>
<ellipse cx="20.7" cy="12.5" rx="20" ry="6.5" fill="#dcdcdc" stroke="#aaa" stroke-width="0.5"/>
<ellipse cx="20.7" cy="14" rx="7" ry="4" fill="#bdbdbd" stroke="#888" stroke-width="0.6"/>
<rect x="14" y="14" width="13.5" height="15" fill="url(#silvH)"/>
<rect x="17.7" y="0" width="6" height="19" rx="2" fill="url(#silvH)"/>
<path d="M10,42 h6 M19,41.5 h10 M10,46.5 h10 M23,46 h12 M10,51 h22" stroke="#444" stroke-width="1.2"/>
</g>
<g transform="translate(1302,406.09999999999997)">
<rect x="0.5" y="6" width="9" height="16.5" rx="2" fill="#161616"/>
<rect x="8.5" y="6" width="80" height="16.5" fill="url(#proxg)"/>
<path d="M27,9 v7 M30,9 v7 M33,9 v7 M36,9 v7 M39,9 v7 M42,9 v7 M45,9 v7 M48,9 v7 M51,9 v7 M54,9 v7 M57,9 v7 M80,9 v7 M83,9 v7" stroke="#2e2e2e" stroke-width="0.9" opacity="0.8"/>
<rect x="9" y="6" width="16" height="16.5" fill="url(#silvV)"/>
<path d="M12,9 h3 v5 h-3z M17,9 h4 v5 h-4z M12,17 h9" stroke="#555" stroke-width="0.8" fill="none"/>
<rect x="61.5" y="0" width="15.5" height="28.5" rx="2" fill="#c8c8c8"/>
<rect x="61.5" y="0" width="5" height="28.5" fill="#a8a8a8"/>
<path d="M67,2 l5,4 l-5,4 l5,4 l-5,4 l5,4 l-5,4 M72,2 l-5,4 l5,4 l-5,4 l5,4 l-5,4 l5,4" stroke="#3a3a3a" stroke-width="1.1" fill="none"/>
<rect x="72.5" y="2" width="4.5" height="24" fill="#f2f2f2"/>
<rect x="87" y="6.8" width="8.7" height="16" rx="2" fill="#3a7ed0"/>
</g>
<g transform="translate(1412.5,300)">
<path d="M74,24 L75,6 Q76,0.5 84,0 L110,0.5 Q117,1 121,7 L124,17 L124,23 L100,30 Z" fill="#29292b"/>
<path d="M75,6 Q76,0.5 84,0 L110,0.5 Q117,1 121,7 L100,10 L78,9 Z" fill="#353537"/>
<path d="M104,9 L106,27 M110,8 L112,25 M116,7 L118,22" stroke="#151517" stroke-width="1.6" fill="none"/>
<path d="M0.5,45.7 L76,22 L100,28 L123,20 L133.8,29.8 L71.3,60.7 Z" fill="#3b3b3d"/>
<path d="M71.3,60.7 L133.8,29.8 L133.8,65 L72.2,119 L72.2,134 Z" fill="url(#motside)"/>
<path d="M73,66 L133,37 M73,72 L133,43" stroke="#1e1e20" stroke-width="2" fill="none"/>
<path d="M73,69 L133,40" stroke="#4a4a4c" stroke-width="1" fill="none"/>
<path d="M0.5,45.7 L71.3,60.7 L69.7,134 L2,117.3 Z" fill="url(#silv)" stroke="#9a9a9a" stroke-width="0.6"/>
<ellipse cx="35" cy="90.5" rx="29.5" ry="32.5" fill="#262628"/>
<ellipse cx="35" cy="90.5" rx="22" ry="25" fill="#2c2c2e" stroke="#d6d6d6" stroke-width="1.4"/>
<ellipse cx="35" cy="90.5" rx="15" ry="17" fill="#1f1f21" stroke="#5a5a5a" stroke-width="0.6"/>
<path d="M17,101 L38,89" stroke="#6e6e6e" stroke-width="8.5" stroke-linecap="round"/>
<path d="M18,98.5 L37,87.5" stroke="#a8a8a8" stroke-width="3" stroke-linecap="round"/>
<ellipse cx="17" cy="101" rx="4.3" ry="4.3" fill="#c9c5bf"/>
<circle cx="4.3" cy="51.5" r="3" fill="#1a1a1a"/>
<circle cx="66" cy="64.5" r="3" fill="#1a1a1a"/>
<circle cx="4.8" cy="112" r="3" fill="#1a1a1a"/>
<circle cx="64.8" cy="127" r="3" fill="#1a1a1a"/>
<circle cx="3.8" cy="58" r="2.6" fill="#a8c0c8" stroke="#333" stroke-width="0.6"/>
<circle cx="67" cy="73" r="2.6" fill="#a8c0c8" stroke="#333" stroke-width="0.6"/>
<circle cx="4.3" cy="105.5" r="2.6" fill="#a8c0c8" stroke="#333" stroke-width="0.6"/>
<circle cx="66.5" cy="120" r="2.6" fill="#a8c0c8" stroke="#333" stroke-width="0.6"/>
</g>
<g transform="translate(1172.5,481.8)">
<rect x="0.5" y="0.5" width="90" height="42" rx="3" fill="#1b1b1c" stroke="#6a6a6a" stroke-width="0.8"/>
<rect x="0" y="12" width="21" height="21" rx="2" fill="url(#usb)"/>
<rect x="2" y="26" width="17" height="5" fill="#7a7a7a"/>
<rect x="28" y="14" width="15" height="17" fill="#2a2a2a" stroke="#444" stroke-width="0.6"/>
<rect x="48" y="14" width="12" height="17" fill="#0e0e0e"/>
<rect x="62" y="16" width="9" height="10" fill="#333"/>
<rect x="33" y="32" width="6" height="5" fill="#c8b8a0"/>
<rect x="35" y="0.8" width="43" height="6" fill="none" stroke="#777" stroke-width="0.5"/>
<rect x="77.5" y="2.5" width="12.5" height="39" fill="none" stroke="#888" stroke-width="0.6"/>
<rect x="33" y="36.5" width="37" height="6" fill="none" stroke="#777" stroke-width="0.5"/>
<circle cx="4.5" cy="4.5" r="2.6" fill="#0a0a0a" stroke="#cfcfcf" stroke-width="0.7"/>
<circle cx="4.5" cy="37.5" r="2.6" fill="#0a0a0a" stroke="#cfcfcf" stroke-width="0.7"/>
<circle cx="73.3" cy="8.4" r="2.6" fill="#0a0a0a" stroke="#cfcfcf" stroke-width="0.7"/>
<circle cx="73.3" cy="34.2" r="2.6" fill="#0a0a0a" stroke="#cfcfcf" stroke-width="0.7"/>
<circle cx="59.5" cy="3.7" r="1.8" fill="#f4f0e6"/>
<circle cx="65.5" cy="3.7" r="1.8" fill="#f4f0e6"/>
<circle cx="81" cy="29.7" r="1.8" fill="#f4f0e6"/>
<circle cx="87" cy="29.7" r="1.8" fill="#f4f0e6"/>
<circle cx="81" cy="35.5" r="1.8" fill="#f4f0e6"/>
<circle cx="87" cy="35.5" r="1.8" fill="#f4f0e6"/>
<circle cx="36.5" cy="39.7" r="1.8" fill="#f4f0e6"/>
<circle cx="42.5" cy="39.7" r="1.8" fill="#f4f0e6"/>
<circle cx="48.5" cy="39.7" r="1.8" fill="#f4f0e6"/>
<circle cx="54.5" cy="39.7" r="1.8" fill="#f4f0e6"/>
<circle cx="60.5" cy="39.7" r="1.8" fill="#f4f0e6"/>
</g>
<rect x="1207.65" y="483.65" width="3.70" height="3.70" fill="#000" stroke="#f2f000" stroke-width="1.3"/>
<rect x="1213.65" y="483.65" width="3.70" height="3.70" fill="#000" stroke="#f2f000" stroke-width="1.3"/>
<rect x="1219.15" y="483.65" width="3.70" height="3.70" fill="#000" stroke="#f2f000" stroke-width="1.3"/>
<rect x="1224.75" y="483.65" width="3.70" height="3.70" fill="#000" stroke="#f2f000" stroke-width="1.3"/>
<rect x="1251.65" y="486.65" width="3.70" height="3.70" fill="#000" stroke="#f2f000" stroke-width="1.3"/>
<rect x="1257.65" y="486.65" width="3.70" height="3.70" fill="#000" stroke="#f2f000" stroke-width="1.3"/>
<rect x="1251.65" y="492.35" width="3.70" height="3.70" fill="#000" stroke="#f2f000" stroke-width="1.3"/>
<rect x="1257.65" y="492.35" width="3.70" height="3.70" fill="#000" stroke="#f2f000" stroke-width="1.3"/>
<rect x="1251.65" y="498.15" width="3.70" height="3.70" fill="#000" stroke="#f2f000" stroke-width="1.3"/>
<rect x="1257.65" y="498.15" width="3.70" height="3.70" fill="#000" stroke="#f2f000" stroke-width="1.3"/>
<rect x="1251.65" y="503.95" width="3.70" height="3.70" fill="#000" stroke="#f2f000" stroke-width="1.3"/>
<rect x="1257.65" y="503.95" width="3.70" height="3.70" fill="#000" stroke="#f2f000" stroke-width="1.3"/>
<rect x="1215.15" y="494.45" width="3.70" height="3.70" fill="#000" stroke="#f2f000" stroke-width="1.3"/>
<rect x="1215.15" y="499.45" width="3.70" height="3.70" fill="#000" stroke="#f2f000" stroke-width="1.3"/>
<rect x="1215.15" y="504.45" width="3.70" height="3.70" fill="#000" stroke="#f2f000" stroke-width="1.3"/>
<rect x="1215.15" y="509.45" width="3.70" height="3.70" fill="#000" stroke="#f2f000" stroke-width="1.3"/>
<rect x="1236.65" y="519.65" width="3.70" height="3.70" fill="#000" stroke="#f2f000" stroke-width="1.3"/>
<g transform="translate(1355,492)">
<path d="M0.8,12 L0.8,54 Q20.7,62 40.7,54 L40.7,12 Z" fill="#161616"/>
<path d="M0.8,12 L0.8,31 Q20.7,38 40.7,31 L40.7,12 Z" fill="url(#silvH)"/>
<path d="M7,37 Q22,41 40.3,35 L40.3,51 Q22,57 7,53 Z" fill="#e6e6e6"/>
<ellipse cx="20.7" cy="12.5" rx="20" ry="6.5" fill="#dcdcdc" stroke="#aaa" stroke-width="0.5"/>
<ellipse cx="20.7" cy="14" rx="7" ry="4" fill="#bdbdbd" stroke="#888" stroke-width="0.6"/>
<rect x="14" y="14" width="13.5" height="15" fill="url(#silvH)"/>
<rect x="17.7" y="0" width="6" height="19" rx="2" fill="url(#silvH)"/>
<path d="M10,42 h6 M19,41.5 h10 M10,46.5 h10 M23,46 h12 M10,51 h22" stroke="#444" stroke-width="1.2"/>
</g>
<g transform="translate(1307,560.4)">
<rect x="0.5" y="6" width="9" height="16.5" rx="2" fill="#161616"/>
<rect x="8.5" y="6" width="80" height="16.5" fill="url(#proxg)"/>
<path d="M27,9 v7 M30,9 v7 M33,9 v7 M36,9 v7 M39,9 v7 M42,9 v7 M45,9 v7 M48,9 v7 M51,9 v7 M54,9 v7 M57,9 v7 M80,9 v7 M83,9 v7" stroke="#2e2e2e" stroke-width="0.9" opacity="0.8"/>
<rect x="9" y="6" width="16" height="16.5" fill="url(#silvV)"/>
<path d="M12,9 h3 v5 h-3z M17,9 h4 v5 h-4z M12,17 h9" stroke="#555" stroke-width="0.8" fill="none"/>
<rect x="61.5" y="0" width="15.5" height="28.5" rx="2" fill="#c8c8c8"/>
<rect x="61.5" y="0" width="5" height="28.5" fill="#a8a8a8"/>
<path d="M67,2 l5,4 l-5,4 l5,4 l-5,4 l5,4 l-5,4 M72,2 l-5,4 l5,4 l-5,4 l5,4 l-5,4 l5,4" stroke="#3a3a3a" stroke-width="1.1" fill="none"/>
<rect x="72.5" y="2" width="4.5" height="24" fill="#f2f2f2"/>
<rect x="87" y="6.8" width="8.7" height="16" rx="2" fill="#3a7ed0"/>
</g>
<g transform="translate(1417.5,454.5)">
<path d="M74,24 L75,6 Q76,0.5 84,0 L110,0.5 Q117,1 121,7 L124,17 L124,23 L100,30 Z" fill="#29292b"/>
<path d="M75,6 Q76,0.5 84,0 L110,0.5 Q117,1 121,7 L100,10 L78,9 Z" fill="#353537"/>
<path d="M104,9 L106,27 M110,8 L112,25 M116,7 L118,22" stroke="#151517" stroke-width="1.6" fill="none"/>
<path d="M0.5,45.7 L76,22 L100,28 L123,20 L133.8,29.8 L71.3,60.7 Z" fill="#3b3b3d"/>
<path d="M71.3,60.7 L133.8,29.8 L133.8,65 L72.2,119 L72.2,134 Z" fill="url(#motside)"/>
<path d="M73,66 L133,37 M73,72 L133,43" stroke="#1e1e20" stroke-width="2" fill="none"/>
<path d="M73,69 L133,40" stroke="#4a4a4c" stroke-width="1" fill="none"/>
<path d="M0.5,45.7 L71.3,60.7 L69.7,134 L2,117.3 Z" fill="url(#silv)" stroke="#9a9a9a" stroke-width="0.6"/>
<ellipse cx="35" cy="90.5" rx="29.5" ry="32.5" fill="#262628"/>
<ellipse cx="35" cy="90.5" rx="22" ry="25" fill="#2c2c2e" stroke="#d6d6d6" stroke-width="1.4"/>
<ellipse cx="35" cy="90.5" rx="15" ry="17" fill="#1f1f21" stroke="#5a5a5a" stroke-width="0.6"/>
<path d="M17,101 L38,89" stroke="#6e6e6e" stroke-width="8.5" stroke-linecap="round"/>
<path d="M18,98.5 L37,87.5" stroke="#a8a8a8" stroke-width="3" stroke-linecap="round"/>
<ellipse cx="17" cy="101" rx="4.3" ry="4.3" fill="#c9c5bf"/>
<circle cx="4.3" cy="51.5" r="3" fill="#1a1a1a"/>
<circle cx="66" cy="64.5" r="3" fill="#1a1a1a"/>
<circle cx="4.8" cy="112" r="3" fill="#1a1a1a"/>
<circle cx="64.8" cy="127" r="3" fill="#1a1a1a"/>
<circle cx="3.8" cy="58" r="2.6" fill="#a8c0c8" stroke="#333" stroke-width="0.6"/>
<circle cx="67" cy="73" r="2.6" fill="#a8c0c8" stroke="#333" stroke-width="0.6"/>
<circle cx="4.3" cy="105.5" r="2.6" fill="#a8c0c8" stroke="#333" stroke-width="0.6"/>
<circle cx="66.5" cy="120" r="2.6" fill="#a8c0c8" stroke="#333" stroke-width="0.6"/>
</g>
<g transform="translate(486.8,567.5)">
<rect x="0" y="0" width="46.2" height="109.4" rx="1" fill="#2da45a"/>
<rect x="14.9" y="-4.5" width="16.7" height="15" fill="url(#usb)"/>
<rect x="17" y="6" width="12" height="4" fill="#777"/>
<rect x="16.2" y="49" width="14.5" height="14.5" fill="#161616"/>
<rect x="12" y="22" width="7" height="8" rx="1" fill="#e6e6e6"/>
<rect x="24" y="19" width="10" height="10" fill="#1e3a28"/>
<rect x="10" y="36" width="7" height="8" fill="#1a2a20"/>
<rect x="12" y="72" width="9" height="5" fill="#d8c8b0"/>
<rect x="25" y="33" width="6" height="6" fill="#1a2a20"/>
<path d="M23,84 c-6,0 -8,4 -8,8 c0,4 3,8 8,8 c5,0 8,-4 8,-8 c0,-4 -2,-8 -8,-8 z M17,80 q3,-4 6,0 q3,-4 6,0" fill="none" stroke="#e8f0e8" stroke-width="1.1"/>
<rect x="1" y="0.20000000000000018" width="5.5" height="4" fill="#e8e0b8"/>
<rect x="39.7" y="0.20000000000000018" width="5.5" height="4" fill="#e8e0b8"/>
<rect x="1" y="5.73" width="5.5" height="4" fill="#e8e0b8"/>
<rect x="39.7" y="5.73" width="5.5" height="4" fill="#e8e0b8"/>
<rect x="1" y="11.260000000000002" width="5.5" height="4" fill="#e8e0b8"/>
<rect x="39.7" y="11.260000000000002" width="5.5" height="4" fill="#e8e0b8"/>
<rect x="1" y="16.79" width="5.5" height="4" fill="#e8e0b8"/>
<rect x="39.7" y="16.79" width="5.5" height="4" fill="#e8e0b8"/>
<rect x="1" y="22.32" width="5.5" height="4" fill="#e8e0b8"/>
<rect x="39.7" y="22.32" width="5.5" height="4" fill="#e8e0b8"/>
<rect x="1" y="27.85" width="5.5" height="4" fill="#e8e0b8"/>
<rect x="39.7" y="27.85" width="5.5" height="4" fill="#e8e0b8"/>
<rect x="1" y="33.38" width="5.5" height="4" fill="#e8e0b8"/>
<rect x="39.7" y="33.38" width="5.5" height="4" fill="#e8e0b8"/>
<rect x="1" y="38.910000000000004" width="5.5" height="4" fill="#e8e0b8"/>
<rect x="39.7" y="38.910000000000004" width="5.5" height="4" fill="#e8e0b8"/>
<rect x="1" y="44.440000000000005" width="5.5" height="4" fill="#e8e0b8"/>
<rect x="39.7" y="44.440000000000005" width="5.5" height="4" fill="#e8e0b8"/>
<rect x="1" y="49.970000000000006" width="5.5" height="4" fill="#e8e0b8"/>
<rect x="39.7" y="49.970000000000006" width="5.5" height="4" fill="#e8e0b8"/>
<rect x="1" y="55.50000000000001" width="5.5" height="4" fill="#e8e0b8"/>
<rect x="39.7" y="55.50000000000001" width="5.5" height="4" fill="#e8e0b8"/>
<rect x="1" y="61.03000000000001" width="5.5" height="4" fill="#e8e0b8"/>
<rect x="39.7" y="61.03000000000001" width="5.5" height="4" fill="#e8e0b8"/>
<rect x="1" y="66.56" width="5.5" height="4" fill="#e8e0b8"/>
<rect x="39.7" y="66.56" width="5.5" height="4" fill="#e8e0b8"/>
<rect x="1" y="72.09" width="5.5" height="4" fill="#e8e0b8"/>
<rect x="39.7" y="72.09" width="5.5" height="4" fill="#e8e0b8"/>
<rect x="1" y="77.62" width="5.5" height="4" fill="#e8e0b8"/>
<rect x="39.7" y="77.62" width="5.5" height="4" fill="#e8e0b8"/>
<rect x="1" y="83.15" width="5.5" height="4" fill="#e8e0b8"/>
<rect x="39.7" y="83.15" width="5.5" height="4" fill="#e8e0b8"/>
<rect x="1" y="88.68" width="5.5" height="4" fill="#e8e0b8"/>
<rect x="39.7" y="88.68" width="5.5" height="4" fill="#e8e0b8"/>
<rect x="1" y="94.21000000000001" width="5.5" height="4" fill="#e8e0b8"/>
<rect x="39.7" y="94.21000000000001" width="5.5" height="4" fill="#e8e0b8"/>
<rect x="1" y="99.74000000000001" width="5.5" height="4" fill="#e8e0b8"/>
<rect x="39.7" y="99.74000000000001" width="5.5" height="4" fill="#e8e0b8"/>
<rect x="1" y="105.27000000000001" width="5.5" height="4" fill="#e8e0b8"/>
<rect x="39.7" y="105.27000000000001" width="5.5" height="4" fill="#e8e0b8"/>
<circle cx="38" cy="4" r="2.6" fill="#222" stroke="#c8b070" stroke-width="0.8"/>
<circle cx="8" cy="104" r="2.6" fill="#222" stroke="#c8b070" stroke-width="0.8"/><circle cx="38" cy="104" r="2.6" fill="#222" stroke="#c8b070" stroke-width="0.8"/>
<rect x="15.5" y="105" width="3" height="4" fill="#e8e0b8"/>
<rect x="21.5" y="105" width="3" height="4" fill="#e8e0b8"/>
<rect x="27.5" y="105" width="3" height="4" fill="#e8e0b8"/>
</g>
<rect x="494.65" y="569.65" width="4.70" height="4.70" fill="#000" stroke="#f2f000" stroke-width="1.3"/>
<rect x="487.95" y="583.94" width="4.70" height="4.70" fill="#000" stroke="#f2f000" stroke-width="1.3"/>
<rect x="487.95" y="589.47" width="4.70" height="4.70" fill="#000" stroke="#f2f000" stroke-width="1.3"/>
<rect x="487.95" y="595.00" width="4.70" height="4.70" fill="#000" stroke="#f2f000" stroke-width="1.3"/>
<rect x="487.95" y="600.53" width="4.70" height="4.70" fill="#000" stroke="#f2f000" stroke-width="1.3"/>
<rect x="487.95" y="611.59" width="4.70" height="4.70" fill="#000" stroke="#f2f000" stroke-width="1.3"/>
<rect x="487.95" y="617.12" width="4.70" height="4.70" fill="#000" stroke="#f2f000" stroke-width="1.3"/>
<rect x="487.95" y="622.65" width="4.70" height="4.70" fill="#000" stroke="#f2f000" stroke-width="1.3"/>
<rect x="487.95" y="628.18" width="4.70" height="4.70" fill="#000" stroke="#f2f000" stroke-width="1.3"/>
<rect x="487.95" y="639.24" width="4.70" height="4.70" fill="#000" stroke="#f2f000" stroke-width="1.3"/>
<rect x="487.95" y="644.77" width="4.70" height="4.70" fill="#000" stroke="#f2f000" stroke-width="1.3"/>
<rect x="487.95" y="650.30" width="4.70" height="4.70" fill="#000" stroke="#f2f000" stroke-width="1.3"/>
<rect x="487.95" y="655.83" width="4.70" height="4.70" fill="#000" stroke="#f2f000" stroke-width="1.3"/>
<rect x="487.95" y="666.89" width="4.70" height="4.70" fill="#000" stroke="#f2f000" stroke-width="1.3"/>
<rect x="487.95" y="672.42" width="4.70" height="4.70" fill="#000" stroke="#f2f000" stroke-width="1.3"/>
<rect x="527.15" y="600.53" width="4.70" height="4.70" fill="#000" stroke="#f2f000" stroke-width="1.3"/>
<rect x="527.15" y="611.59" width="4.70" height="4.70" fill="#000" stroke="#f2f000" stroke-width="1.3"/>
<rect x="527.15" y="617.12" width="4.70" height="4.70" fill="#000" stroke="#f2f000" stroke-width="1.3"/>
<rect x="527.15" y="628.18" width="4.70" height="4.70" fill="#000" stroke="#f2f000" stroke-width="1.3"/>
<rect x="527.15" y="639.24" width="4.70" height="4.70" fill="#000" stroke="#f2f000" stroke-width="1.3"/>
<rect x="527.15" y="644.77" width="4.70" height="4.70" fill="#000" stroke="#f2f000" stroke-width="1.3"/>
<rect x="527.15" y="650.30" width="4.70" height="4.70" fill="#000" stroke="#f2f000" stroke-width="1.3"/>
<rect x="527.15" y="655.83" width="4.70" height="4.70" fill="#000" stroke="#f2f000" stroke-width="1.3"/>
<rect x="527.15" y="666.89" width="4.70" height="4.70" fill="#000" stroke="#f2f000" stroke-width="1.3"/>
<rect x="527.15" y="672.42" width="4.70" height="4.70" fill="#000" stroke="#f2f000" stroke-width="1.3"/>
<g transform="translate(579.7,558.7)">
<rect x="0" y="0" width="54.5" height="39.6" fill="#0d0d0d"/>
<rect x="0" y="39.2" width="54.5" height="0.8" fill="#9a9a9a"/>
<circle cx="14.3" cy="4.8" r="4.2" fill="#0d0d0d" stroke="#e8e8e8" stroke-width="0.8"/>
<circle cx="43.8" cy="4.8" r="4.2" fill="#1a1a1a" stroke="#cfcfcf" stroke-width="0.8"/>
<rect x="1.5" y="8" width="5.5" height="28" fill="none" stroke="#bbb" stroke-width="0.5"/>
<text x="9" y="12" font-family="Liberation Sans" font-size="3.5" fill="#ddd">GND</text>
<text x="9" y="24" font-family="Liberation Sans" font-size="3.5" fill="#ddd">DT</text>
<text x="9" y="35" font-family="Liberation Sans" font-size="3.5" fill="#ddd">CLK</text>
<rect x="18.2" y="8.8" width="29.5" height="28.2" fill="#cfcfcf" stroke="#e8e8e8" stroke-width="0.8"/>
<rect x="46.5" y="14" width="3.5" height="3" fill="#bbb"/><rect x="46.5" y="21" width="3.5" height="3" fill="#bbb"/><rect x="46.5" y="28" width="3.5" height="3" fill="#bbb"/>
<circle cx="32.5" cy="22.5" r="10" fill="#d8d8d8" stroke="#b0b0b0" stroke-width="0.8"/>
<rect x="31" y="14" width="3" height="17" fill="#9a9a9a"/>
</g>
<rect x="581.65" y="577.95" width="3.70" height="3.70" fill="#000" stroke="#f2f000" stroke-width="1.3"/>
<rect x="581.65" y="584.45" width="3.70" height="3.70" fill="#000" stroke="#f2f000" stroke-width="1.3"/>
<rect x="581.65" y="590.45" width="3.70" height="3.70" fill="#000" stroke="#f2f000" stroke-width="1.3"/>
<g transform="translate(579.7,603)">
<rect x="0" y="0" width="54.5" height="39.6" fill="#0d0d0d"/>
<rect x="0" y="39.2" width="54.5" height="0.8" fill="#9a9a9a"/>
<circle cx="14.3" cy="4.8" r="4.2" fill="#0d0d0d" stroke="#e8e8e8" stroke-width="0.8"/>
<circle cx="43.8" cy="4.8" r="4.2" fill="#1a1a1a" stroke="#cfcfcf" stroke-width="0.8"/>
<rect x="1.5" y="8" width="5.5" height="28" fill="none" stroke="#bbb" stroke-width="0.5"/>
<text x="9" y="12" font-family="Liberation Sans" font-size="3.5" fill="#ddd">GND</text>
<text x="9" y="24" font-family="Liberation Sans" font-size="3.5" fill="#ddd">DT</text>
<text x="9" y="35" font-family="Liberation Sans" font-size="3.5" fill="#ddd">CLK</text>
<rect x="18.2" y="8.8" width="29.5" height="28.2" fill="#cfcfcf" stroke="#e8e8e8" stroke-width="0.8"/>
<rect x="46.5" y="14" width="3.5" height="3" fill="#bbb"/><rect x="46.5" y="21" width="3.5" height="3" fill="#bbb"/><rect x="46.5" y="28" width="3.5" height="3" fill="#bbb"/>
<circle cx="32.5" cy="22.5" r="10" fill="#d8d8d8" stroke="#b0b0b0" stroke-width="0.8"/>
<rect x="31" y="14" width="3" height="17" fill="#9a9a9a"/>
</g>
<rect x="581.65" y="622.25" width="3.70" height="3.70" fill="#000" stroke="#f2f000" stroke-width="1.3"/>
<rect x="581.65" y="628.75" width="3.70" height="3.70" fill="#000" stroke="#f2f000" stroke-width="1.3"/>
<rect x="581.65" y="634.75" width="3.70" height="3.70" fill="#000" stroke="#f2f000" stroke-width="1.3"/>
<g transform="translate(579.7,646)">
<rect x="0" y="0" width="54.5" height="39.6" fill="#0d0d0d"/>
<rect x="0" y="39.2" width="54.5" height="0.8" fill="#9a9a9a"/>
<circle cx="14.3" cy="4.8" r="4.2" fill="#0d0d0d" stroke="#e8e8e8" stroke-width="0.8"/>
<circle cx="43.8" cy="4.8" r="4.2" fill="#1a1a1a" stroke="#cfcfcf" stroke-width="0.8"/>
<rect x="1.5" y="8" width="5.5" height="28" fill="none" stroke="#bbb" stroke-width="0.5"/>
<text x="9" y="12" font-family="Liberation Sans" font-size="3.5" fill="#ddd">GND</text>
<text x="9" y="24" font-family="Liberation Sans" font-size="3.5" fill="#ddd">DT</text>
<text x="9" y="35" font-family="Liberation Sans" font-size="3.5" fill="#ddd">CLK</text>
<rect x="18.2" y="8.8" width="29.5" height="28.2" fill="#cfcfcf" stroke="#e8e8e8" stroke-width="0.8"/>
<rect x="46.5" y="14" width="3.5" height="3" fill="#bbb"/><rect x="46.5" y="21" width="3.5" height="3" fill="#bbb"/><rect x="46.5" y="28" width="3.5" height="3" fill="#bbb"/>
<circle cx="32.5" cy="22.5" r="10" fill="#d8d8d8" stroke="#b0b0b0" stroke-width="0.8"/>
<rect x="31" y="14" width="3" height="17" fill="#9a9a9a"/>
</g>
<rect x="581.65" y="665.25" width="3.70" height="3.70" fill="#000" stroke="#f2f000" stroke-width="1.3"/>
<rect x="581.65" y="671.75" width="3.70" height="3.70" fill="#000" stroke="#f2f000" stroke-width="1.3"/>
<rect x="581.65" y="677.75" width="3.70" height="3.70" fill="#000" stroke="#f2f000" stroke-width="1.3"/>
<g transform="translate(367.2,773.5)">
<rect x="5" y="-30.5" width="79" height="32" rx="2" fill="#3f3f41"/>
<rect x="5" y="178" width="79" height="33" rx="2" fill="#3c3c3e"/>
<circle cx="22" cy="-19" r="11.2" fill="#262626"/>
<rect x="15.5" y="-31" width="13" height="10" fill="#262626"/>
<circle cx="22" cy="199" r="11.2" fill="#262626"/>
<rect x="15.5" y="201" width="13" height="11" fill="#262626"/>
<circle cx="66.2" cy="-19" r="11.2" fill="#262626"/>
<rect x="59.7" y="-31" width="13" height="10" fill="#262626"/>
<circle cx="66.2" cy="199" r="11.2" fill="#262626"/>
<rect x="59.7" y="201" width="13" height="11" fill="#262626"/>
<rect x="0" y="0" width="89" height="180" rx="2" fill="#3a3a3c"/>
<path d="M5,94 L5,38 A39.5,39.5 0 0 1 84,38 L84,94 Z" fill="#3c3c3e" stroke="#2c2c2e" stroke-width="1.2"/>
<circle cx="44.5" cy="43.3" r="29" fill="#38383a" stroke="#232325" stroke-width="1.8"/>
<circle cx="44.5" cy="43.3" r="21" fill="#353537"/>
<circle cx="44.5" cy="43.3" r="12.5" fill="#dcd8d0" stroke="#b8b3a8" stroke-width="2.4" stroke-dasharray="1.3 1.2"/>
<circle cx="44.5" cy="43.3" r="9" fill="#cdc9c0"/>
<circle cx="44.5" cy="43.3" r="6.3" fill="#141414" stroke="#8a857c" stroke-width="0.8"/>
<path d="M30,94 A14.5,14.5 0 0 1 59,94" fill="#363638" stroke="#262628" stroke-width="1.2"/>
<path d="M2,94 H87" stroke="#2a2a2c" stroke-width="1.5"/>
<rect x="8" y="102" width="73" height="51" fill="#333335"/>
<rect x="11" y="104.8" width="68" height="44.7" fill="#232325"/>
<rect x="11" y="116.8" width="68" height="23" fill="#fbfbfb"/>
<rect x="5" y="155.5" width="79" height="11" fill="#1f1f21"/>
</g>
<g transform="translate(458.79999999999995,773.5)">
<rect x="5" y="-30.5" width="79" height="32" rx="2" fill="#3f3f41"/>
<rect x="5" y="178" width="79" height="33" rx="2" fill="#3c3c3e"/>
<circle cx="22" cy="-19" r="11.2" fill="#262626"/>
<rect x="15.5" y="-31" width="13" height="10" fill="#262626"/>
<circle cx="22" cy="199" r="11.2" fill="#262626"/>
<rect x="15.5" y="201" width="13" height="11" fill="#262626"/>
<circle cx="66.2" cy="-19" r="11.2" fill="#262626"/>
<rect x="59.7" y="-31" width="13" height="10" fill="#262626"/>
<circle cx="66.2" cy="199" r="11.2" fill="#262626"/>
<rect x="59.7" y="201" width="13" height="11" fill="#262626"/>
<rect x="0" y="0" width="89" height="180" rx="2" fill="#3a3a3c"/>
<path d="M5,94 L5,38 A39.5,39.5 0 0 1 84,38 L84,94 Z" fill="#3c3c3e" stroke="#2c2c2e" stroke-width="1.2"/>
<circle cx="44.5" cy="43.3" r="29" fill="#38383a" stroke="#232325" stroke-width="1.8"/>
<circle cx="44.5" cy="43.3" r="21" fill="#353537"/>
<circle cx="44.5" cy="43.3" r="12.5" fill="#dcd8d0" stroke="#b8b3a8" stroke-width="2.4" stroke-dasharray="1.3 1.2"/>
<circle cx="44.5" cy="43.3" r="9" fill="#cdc9c0"/>
<circle cx="44.5" cy="43.3" r="6.3" fill="#141414" stroke="#8a857c" stroke-width="0.8"/>
<path d="M30,94 A14.5,14.5 0 0 1 59,94" fill="#363638" stroke="#262628" stroke-width="1.2"/>
<path d="M2,94 H87" stroke="#2a2a2c" stroke-width="1.5"/>
<rect x="8" y="102" width="73" height="51" fill="#333335"/>
<rect x="11" y="104.8" width="68" height="44.7" fill="#232325"/>
<rect x="11" y="116.8" width="68" height="23" fill="#fbfbfb"/>
<rect x="5" y="155.5" width="79" height="11" fill="#1f1f21"/>
</g>
<g transform="translate(550.4,773.5)">
<rect x="5" y="-30.5" width="79" height="32" rx="2" fill="#3f3f41"/>
<rect x="5" y="178" width="79" height="33" rx="2" fill="#3c3c3e"/>
<circle cx="22" cy="-19" r="11.2" fill="#262626"/>
<rect x="15.5" y="-31" width="13" height="10" fill="#262626"/>
<circle cx="22" cy="199" r="11.2" fill="#262626"/>
<rect x="15.5" y="201" width="13" height="11" fill="#262626"/>
<circle cx="66.2" cy="-19" r="11.2" fill="#262626"/>
<rect x="59.7" y="-31" width="13" height="10" fill="#262626"/>
<circle cx="66.2" cy="199" r="11.2" fill="#262626"/>
<rect x="59.7" y="201" width="13" height="11" fill="#262626"/>
<rect x="0" y="0" width="89" height="180" rx="2" fill="#3a3a3c"/>
<path d="M5,94 L5,38 A39.5,39.5 0 0 1 84,38 L84,94 Z" fill="#3c3c3e" stroke="#2c2c2e" stroke-width="1.2"/>
<circle cx="44.5" cy="43.3" r="29" fill="#38383a" stroke="#232325" stroke-width="1.8"/>
<circle cx="44.5" cy="43.3" r="21" fill="#353537"/>
<circle cx="44.5" cy="43.3" r="12.5" fill="#dcd8d0" stroke="#b8b3a8" stroke-width="2.4" stroke-dasharray="1.3 1.2"/>
<circle cx="44.5" cy="43.3" r="9" fill="#cdc9c0"/>
<circle cx="44.5" cy="43.3" r="6.3" fill="#141414" stroke="#8a857c" stroke-width="0.8"/>
<path d="M30,94 A14.5,14.5 0 0 1 59,94" fill="#363638" stroke="#262628" stroke-width="1.2"/>
<path d="M2,94 H87" stroke="#2a2a2c" stroke-width="1.5"/>
<rect x="8" y="102" width="73" height="51" fill="#333335"/>
<rect x="11" y="104.8" width="68" height="44.7" fill="#232325"/>
<rect x="11" y="116.8" width="68" height="23" fill="#fbfbfb"/>
<rect x="5" y="155.5" width="79" height="11" fill="#1f1f21"/>
</g>
<g transform="translate(642.0,773.5)">
<rect x="5" y="-30.5" width="79" height="32" rx="2" fill="#3f3f41"/>
<rect x="5" y="178" width="79" height="33" rx="2" fill="#3c3c3e"/>
<circle cx="22" cy="-19" r="11.2" fill="#262626"/>
<rect x="15.5" y="-31" width="13" height="10" fill="#262626"/>
<circle cx="22" cy="199" r="11.2" fill="#262626"/>
<rect x="15.5" y="201" width="13" height="11" fill="#262626"/>
<circle cx="66.2" cy="-19" r="11.2" fill="#262626"/>
<rect x="59.7" y="-31" width="13" height="10" fill="#262626"/>
<circle cx="66.2" cy="199" r="11.2" fill="#262626"/>
<rect x="59.7" y="201" width="13" height="11" fill="#262626"/>
<rect x="0" y="0" width="89" height="180" rx="2" fill="#3a3a3c"/>
<path d="M5,94 L5,38 A39.5,39.5 0 0 1 84,38 L84,94 Z" fill="#3c3c3e" stroke="#2c2c2e" stroke-width="1.2"/>
<circle cx="44.5" cy="43.3" r="29" fill="#38383a" stroke="#232325" stroke-width="1.8"/>
<circle cx="44.5" cy="43.3" r="21" fill="#353537"/>
<circle cx="44.5" cy="43.3" r="12.5" fill="#dcd8d0" stroke="#b8b3a8" stroke-width="2.4" stroke-dasharray="1.3 1.2"/>
<circle cx="44.5" cy="43.3" r="9" fill="#cdc9c0"/>
<circle cx="44.5" cy="43.3" r="6.3" fill="#141414" stroke="#8a857c" stroke-width="0.8"/>
<path d="M30,94 A14.5,14.5 0 0 1 59,94" fill="#363638" stroke="#262628" stroke-width="1.2"/>
<path d="M2,94 H87" stroke="#2a2a2c" stroke-width="1.5"/>
<rect x="8" y="102" width="73" height="51" fill="#333335"/>
<rect x="11" y="104.8" width="68" height="44.7" fill="#232325"/>
<rect x="11" y="116.8" width="68" height="23" fill="#fbfbfb"/>
<rect x="5" y="155.5" width="79" height="11" fill="#1f1f21"/>
</g>
<g transform="translate(893.8,597.8)">
<path d="M12,1.8 L38,1.8 L38,35 L12,35 A16.5,16.5 0 0 1 12,1.8 Z" fill="#b8612e"/>
<path d="M36,7.2 H47.5 M36,18.7 H47.5 M36,29.7 H47.5" stroke="#dcdfe2" stroke-width="2.4"/>
<path d="M35,4.5 V10 M35,16 V21.5 M35,27 V32.5" stroke="#dcdfe2" stroke-width="2.5"/>
<circle cx="30.7" cy="7.2" r="3.6" fill="#e9e9ea" stroke="#c5c5c5" stroke-width="0.6"/>
<circle cx="30.7" cy="18.7" r="3.6" fill="#e9e9ea" stroke="#c5c5c5" stroke-width="0.6"/>
<circle cx="30.7" cy="29.7" r="3.6" fill="#e9e9ea" stroke="#c5c5c5" stroke-width="0.6"/>
<path d="M5,0 H20 Q26,8 26,17 Q26,26 20,34 H5 Q-1,26 -1,17 Q-1,8 5,0 Z" fill="#e2e3e6"/>
<circle cx="12.5" cy="17" r="11.5" fill="url(#potknob)" stroke="#c8c8cc" stroke-width="1"/>
<path d="M4,15 Q12.5,10 21,15 L21,20 Q12.5,24 4,20 Z" fill="#b4b8bc"/>
<path d="M6,17.5 H19" stroke="#8a8e92" stroke-width="2"/>
<circle cx="5.2" cy="3.5" r="1.8" fill="#d6a050"/>
<circle cx="18.7" cy="3.5" r="1.8" fill="#d6a050"/>
<circle cx="5.2" cy="33.5" r="1.8" fill="#d6a050"/>
<circle cx="18.7" cy="33.5" r="1.8" fill="#d6a050"/>
</g>
<g transform="translate(893.8,636.3)">
<path d="M12,1.8 L38,1.8 L38,35 L12,35 A16.5,16.5 0 0 1 12,1.8 Z" fill="#b8612e"/>
<path d="M36,7.2 H47.5 M36,18.7 H47.5 M36,29.7 H47.5" stroke="#dcdfe2" stroke-width="2.4"/>
<path d="M35,4.5 V10 M35,16 V21.5 M35,27 V32.5" stroke="#dcdfe2" stroke-width="2.5"/>
<circle cx="30.7" cy="7.2" r="3.6" fill="#e9e9ea" stroke="#c5c5c5" stroke-width="0.6"/>
<circle cx="30.7" cy="18.7" r="3.6" fill="#e9e9ea" stroke="#c5c5c5" stroke-width="0.6"/>
<circle cx="30.7" cy="29.7" r="3.6" fill="#e9e9ea" stroke="#c5c5c5" stroke-width="0.6"/>
<path d="M5,0 H20 Q26,8 26,17 Q26,26 20,34 H5 Q-1,26 -1,17 Q-1,8 5,0 Z" fill="#e2e3e6"/>
<circle cx="12.5" cy="17" r="11.5" fill="url(#potknob)" stroke="#c8c8cc" stroke-width="1"/>
<path d="M4,15 Q12.5,10 21,15 L21,20 Q12.5,24 4,20 Z" fill="#b4b8bc"/>
<path d="M6,17.5 H19" stroke="#8a8e92" stroke-width="2"/>
<circle cx="5.2" cy="3.5" r="1.8" fill="#d6a050"/>
<circle cx="18.7" cy="3.5" r="1.8" fill="#d6a050"/>
<circle cx="5.2" cy="33.5" r="1.8" fill="#d6a050"/>
<circle cx="18.7" cy="33.5" r="1.8" fill="#d6a050"/>
</g>
<g transform="translate(893.8,674.8)">
<path d="M12,1.8 L38,1.8 L38,35 L12,35 A16.5,16.5 0 0 1 12,1.8 Z" fill="#b8612e"/>
<path d="M36,7.2 H47.5 M36,18.7 H47.5 M36,29.7 H47.5" stroke="#dcdfe2" stroke-width="2.4"/>
<path d="M35,4.5 V10 M35,16 V21.5 M35,27 V32.5" stroke="#dcdfe2" stroke-width="2.5"/>
<circle cx="30.7" cy="7.2" r="3.6" fill="#e9e9ea" stroke="#c5c5c5" stroke-width="0.6"/>
<circle cx="30.7" cy="18.7" r="3.6" fill="#e9e9ea" stroke="#c5c5c5" stroke-width="0.6"/>
<circle cx="30.7" cy="29.7" r="3.6" fill="#e9e9ea" stroke="#c5c5c5" stroke-width="0.6"/>
<path d="M5,0 H20 Q26,8 26,17 Q26,26 20,34 H5 Q-1,26 -1,17 Q-1,8 5,0 Z" fill="#e2e3e6"/>
<circle cx="12.5" cy="17" r="11.5" fill="url(#potknob)" stroke="#c8c8cc" stroke-width="1"/>
<path d="M4,15 Q12.5,10 21,15 L21,20 Q12.5,24 4,20 Z" fill="#b4b8bc"/>
<path d="M6,17.5 H19" stroke="#8a8e92" stroke-width="2"/>
<circle cx="5.2" cy="3.5" r="1.8" fill="#d6a050"/>
<circle cx="18.7" cy="3.5" r="1.8" fill="#d6a050"/>
<circle cx="5.2" cy="33.5" r="1.8" fill="#d6a050"/>
<circle cx="18.7" cy="33.5" r="1.8" fill="#d6a050"/>
</g>
<g transform="translate(964.3,614.7)">
<rect x="0" y="0" width="38.5" height="50" rx="2" fill="#1f5cc4"/>
<rect x="9.7" y="-2.4" width="19.8" height="16.2" rx="1.5" fill="url(#usb)"/>
<rect x="11" y="9" width="17" height="4" fill="#888"/>
<rect x="15" y="22" width="9" height="6" fill="#1a1a1a"/>
<rect x="6" y="30" width="6" height="8" rx="1.5" fill="#f0f0f0"/>
<rect x="26.5" y="30" width="6" height="8" rx="1.5" fill="#f0f0f0"/>
<text x="16" y="43" font-family="Liberation Sans" font-size="5" fill="#fff" font-weight="bold">W</text>
<circle cx="3.2" cy="2.5" r="1.8" fill="#e8e0c0"/>
<circle cx="3.2" cy="7.5" r="1.8" fill="#e8e0c0"/>
<circle cx="3.2" cy="12.5" r="1.8" fill="#e8e0c0"/>
<circle cx="36" cy="2.5" r="1.8" fill="#e8e0c0"/>
<circle cx="36" cy="8" r="1.8" fill="#e8e0c0"/>
</g>
<rect x="965.65" y="632.35" width="3.70" height="3.70" fill="#000" stroke="#f2f000" stroke-width="1.3"/>
<rect x="965.65" y="637.85" width="3.70" height="3.70" fill="#000" stroke="#f2f000" stroke-width="1.3"/>
<rect x="965.65" y="643.35" width="3.70" height="3.70" fill="#000" stroke="#f2f000" stroke-width="1.3"/>
<rect x="965.65" y="648.85" width="3.70" height="3.70" fill="#000" stroke="#f2f000" stroke-width="1.3"/>
<rect x="965.65" y="654.35" width="3.70" height="3.70" fill="#000" stroke="#f2f000" stroke-width="1.3"/>
<rect x="965.65" y="659.85" width="3.70" height="3.70" fill="#000" stroke="#f2f000" stroke-width="1.3"/>
<rect x="998.45" y="626.85" width="3.70" height="3.70" fill="#000" stroke="#f2f000" stroke-width="1.3"/>
<rect x="998.45" y="632.35" width="3.70" height="3.70" fill="#000" stroke="#f2f000" stroke-width="1.3"/>
<rect x="998.45" y="637.85" width="3.70" height="3.70" fill="#000" stroke="#f2f000" stroke-width="1.3"/>
<rect x="998.45" y="643.35" width="3.70" height="3.70" fill="#000" stroke="#f2f000" stroke-width="1.3"/>
<rect x="998.45" y="648.85" width="3.70" height="3.70" fill="#000" stroke="#f2f000" stroke-width="1.3"/>
<rect x="998.45" y="654.35" width="3.70" height="3.70" fill="#000" stroke="#f2f000" stroke-width="1.3"/>
<rect x="998.45" y="659.85" width="3.70" height="3.70" fill="#000" stroke="#f2f000" stroke-width="1.3"/>
<rect x="971.25" y="660.15" width="3.70" height="3.70" fill="#000" stroke="#f2f000" stroke-width="1.3"/>
<rect x="976.85" y="660.15" width="3.70" height="3.70" fill="#000" stroke="#f2f000" stroke-width="1.3"/>
<rect x="982.45" y="660.15" width="3.70" height="3.70" fill="#000" stroke="#f2f000" stroke-width="1.3"/>
<rect x="988.05" y="660.15" width="3.70" height="3.70" fill="#000" stroke="#f2f000" stroke-width="1.3"/>
<rect x="993.65" y="660.15" width="3.70" height="3.70" fill="#000" stroke="#f2f000" stroke-width="1.3"/>
<rect x="981.95" y="615.65" width="3.70" height="3.70" fill="#000" stroke="#f2f000" stroke-width="1.3"/>
<rect x="981.95" y="647.15" width="3.70" height="3.70" fill="#000" stroke="#f2f000" stroke-width="1.3"/>
<g transform="translate(1028.3,607.9)">
<rect x="0" y="0" width="85.4" height="66.7" fill="#1c1c1c"/>
<path d="M0,0 V66.7" stroke="#888" stroke-width="0.8"/>
<circle cx="7.3" cy="7.9" r="4.8" fill="none" stroke="#dcdcdc" stroke-width="0.8"/>
<circle cx="79.8" cy="7.9" r="4.8" fill="none" stroke="#dcdcdc" stroke-width="0.8"/>
<circle cx="7.3" cy="59.6" r="4.8" fill="none" stroke="#dcdcdc" stroke-width="0.8"/>
<circle cx="79.8" cy="59.6" r="4.8" fill="none" stroke="#dcdcdc" stroke-width="0.8"/>
<rect x="15" y="5" width="13" height="6" fill="none" stroke="#bbb" stroke-width="0.6"/>
<rect x="31" y="6" width="5" height="7" fill="#111" stroke="#999" stroke-width="0.5"/>
<circle cx="43.5" cy="9.5" r="2.2" fill="#aaa"/><rect x="49" y="6" width="13" height="7" fill="#111" stroke="#999" stroke-width="0.4"/><circle cx="68" cy="9.5" r="2.2" fill="#aaa"/>
<rect x="6.5" y="19" width="3" height="7" fill="#e8dcc0"/>
<rect x="11.7" y="15.4" width="53" height="40.5" fill="#1e9bf2" stroke="#b0b0b0" stroke-width="0.6"/>
<rect x="64.6" y="16" width="19.2" height="39" fill="#1a8ee0"/>
<rect x="80" y="16" width="3.8" height="39" fill="#39a9f5"/>
<circle cx="73.7" cy="22.6" r="4.3" fill="#9aa4aa"/>
<path d="M71,24.6 L76.5,20.6" stroke="#6a7478" stroke-width="0.8"/>
<circle cx="73.7" cy="35.9" r="4.3" fill="#9aa4aa"/>
<path d="M71,37.9 L76.5,33.9" stroke="#6a7478" stroke-width="0.8"/>
<circle cx="73.7" cy="49.4" r="4.3" fill="#9aa4aa"/>
<path d="M71,51.4 L76.5,47.4" stroke="#6a7478" stroke-width="0.8"/>
</g>
<path d="M1016.5,643 H1037" stroke="#9a9a9a" stroke-width="1.8"/>
<path d="M1016.5,649.5 H1037" stroke="#9a9a9a" stroke-width="1.8"/>
<path d="M1016.5,656 H1037" stroke="#9a9a9a" stroke-width="1.8"/>
<g transform="translate(1026.5,690.0)">
<rect x="0.5" y="6" width="9" height="16.5" rx="2" fill="#161616"/>
<rect x="8.5" y="6" width="80" height="16.5" fill="url(#proxg)"/>
<path d="M27,9 v7 M30,9 v7 M33,9 v7 M36,9 v7 M39,9 v7 M42,9 v7 M45,9 v7 M48,9 v7 M51,9 v7 M54,9 v7 M57,9 v7 M80,9 v7 M83,9 v7" stroke="#2e2e2e" stroke-width="0.9" opacity="0.8"/>
<rect x="9" y="6" width="16" height="16.5" fill="url(#silvV)"/>
<path d="M12,9 h3 v5 h-3z M17,9 h4 v5 h-4z M12,17 h9" stroke="#555" stroke-width="0.8" fill="none"/>
<rect x="61.5" y="0" width="15.5" height="28.5" rx="2" fill="#c8c8c8"/>
<rect x="61.5" y="0" width="5" height="28.5" fill="#a8a8a8"/>
<path d="M67,2 l5,4 l-5,4 l5,4 l-5,4 l5,4 l-5,4 M72,2 l-5,4 l5,4 l-5,4 l5,4 l-5,4 l5,4" stroke="#3a3a3a" stroke-width="1.1" fill="none"/>
<rect x="72.5" y="2" width="4.5" height="24" fill="#f2f2f2"/>
<rect x="87" y="6.8" width="8.7" height="16" rx="2" fill="#3a7ed0"/>
</g>
<g transform="translate(1026.5,723.5999999999999)">
<rect x="0.5" y="6" width="9" height="16.5" rx="2" fill="#161616"/>
<rect x="8.5" y="6" width="80" height="16.5" fill="url(#proxg)"/>
<path d="M27,9 v7 M30,9 v7 M33,9 v7 M36,9 v7 M39,9 v7 M42,9 v7 M45,9 v7 M48,9 v7 M51,9 v7 M54,9 v7 M57,9 v7 M80,9 v7 M83,9 v7" stroke="#2e2e2e" stroke-width="0.9" opacity="0.8"/>
<rect x="9" y="6" width="16" height="16.5" fill="url(#silvV)"/>
<path d="M12,9 h3 v5 h-3z M17,9 h4 v5 h-4z M12,17 h9" stroke="#555" stroke-width="0.8" fill="none"/>
<rect x="61.5" y="0" width="15.5" height="28.5" rx="2" fill="#c8c8c8"/>
<rect x="61.5" y="0" width="5" height="28.5" fill="#a8a8a8"/>
<path d="M67,2 l5,4 l-5,4 l5,4 l-5,4 l5,4 l-5,4 M72,2 l-5,4 l5,4 l-5,4 l5,4 l-5,4 l5,4" stroke="#3a3a3a" stroke-width="1.1" fill="none"/>
<rect x="72.5" y="2" width="4.5" height="24" fill="#f2f2f2"/>
<rect x="87" y="6.8" width="8.7" height="16" rx="2" fill="#3a7ed0"/>
</g>
<g transform="translate(1026.5,757.5)">
<rect x="0.5" y="6" width="9" height="16.5" rx="2" fill="#161616"/>
<rect x="8.5" y="6" width="80" height="16.5" fill="url(#proxg)"/>
<path d="M27,9 v7 M30,9 v7 M33,9 v7 M36,9 v7 M39,9 v7 M42,9 v7 M45,9 v7 M48,9 v7 M51,9 v7 M54,9 v7 M57,9 v7 M80,9 v7 M83,9 v7" stroke="#2e2e2e" stroke-width="0.9" opacity="0.8"/>
<rect x="9" y="6" width="16" height="16.5" fill="url(#silvV)"/>
<path d="M12,9 h3 v5 h-3z M17,9 h4 v5 h-4z M12,17 h9" stroke="#555" stroke-width="0.8" fill="none"/>
<rect x="61.5" y="0" width="15.5" height="28.5" rx="2" fill="#c8c8c8"/>
<rect x="61.5" y="0" width="5" height="28.5" fill="#a8a8a8"/>
<path d="M67,2 l5,4 l-5,4 l5,4 l-5,4 l5,4 l-5,4 M72,2 l-5,4 l5,4 l-5,4 l5,4 l-5,4 l5,4" stroke="#3a3a3a" stroke-width="1.1" fill="none"/>
<rect x="72.5" y="2" width="4.5" height="24" fill="#f2f2f2"/>
<rect x="87" y="6.8" width="8.7" height="16" rx="2" fill="#3a7ed0"/>
</g>
<path d="M724.2,228.3 C723,245 738,255 738.5,268.8" stroke="#dc5e60" stroke-width="1.1" fill="none"/>
<path d="M692.2,293.5 L738.5,285.6" stroke="#dc5e60" stroke-width="1.1" fill="none"/>
<path d="M675.5,327 L719,334" stroke="#de8a52" stroke-width="1.1" fill="none"/>
<path d="M665,371.2 L719,340" stroke="#d6c25a" stroke-width="1.1" fill="none"/>
<path d="M659.8,371.2 L719,345.6" stroke="#dc5e60" stroke-width="1.1" fill="none"/>
<path d="M670.4,371.2 L719,351" stroke="#a8d46a" stroke-width="1.1" fill="none"/>
<path d="M796.5,285 L862.6,296.4" stroke="#dc5e60" stroke-width="1.1" fill="none"/>
<path d="M796.5,291 L862.6,303.7" stroke="#de8a52" stroke-width="1.1" fill="none"/>
<path d="M796.5,296.5 L862.6,345" stroke="#dc5e60" stroke-width="1.1" fill="none"/>
<path d="M796.5,302 L862.6,352.2" stroke="#de8a52" stroke-width="1.1" fill="none"/>
<path d="M790.5,296.5 L862.6,393.6" stroke="#dc5e60" stroke-width="1.1" fill="none"/>
<path d="M790.5,302 L862.6,400.8" stroke="#de8a52" stroke-width="1.1" fill="none"/>
<path d="M755.6,373.5 L645.6,450.6" stroke="#dc5e60" stroke-width="1.1" fill="none"/>
<path d="M761.5,380 L645.6,457.9" stroke="#de8a52" stroke-width="1.1" fill="none"/>
<path d="M761.5,373.5 C760,400 758,430 756.6,450.6" stroke="#dc5e60" stroke-width="1.1" fill="none"/>
<path d="M767.5,380 C762,400 757,430 756.6,457.9" stroke="#de8a52" stroke-width="1.1" fill="none"/>
<path d="M950.3,296.4 L1055.3,226" stroke="#d6c25a" stroke-width="1.1" fill="none"/>
<path d="M950.3,345 L1060.3,370.7" stroke="#d6c25a" stroke-width="1.1" fill="none"/>
<path d="M950.3,393.6 L1065.3,525" stroke="#d6c25a" stroke-width="1.1" fill="none"/>
<path d="M733.5,450 L497,571" stroke="#dc5e60" stroke-width="1.1" fill="none"/>
<path d="M845,450.6 L983.8,617.5" stroke="#dc5e60" stroke-width="1.1" fill="none"/>
<path d="M1055.3,205 L1199,186.8" stroke="#dc5e60" stroke-width="1.1" fill="none"/>
<path d="M1055.3,212.2 L1204.8,186.6" stroke="#de8a52" stroke-width="1.1" fill="none"/>
<path d="M1243.5,189.8 L1499.5,156.7" stroke="#dc5e60" stroke-width="1.1" fill="none"/>
<path d="M1249.3,189.8 L1508.7,159.5" stroke="#de8a52" stroke-width="1.1" fill="none"/>
<path d="M1249.3,195.6 L1518.7,161.3" stroke="#d6c25a" stroke-width="1.1" fill="none"/>
<path d="M1243.5,201.5 L1348,221.7" stroke="#dc5e60" stroke-width="1.1" fill="none"/>
<path d="M1249.3,201.5 L1348,227" stroke="#de8a52" stroke-width="1.1" fill="none"/>
<path d="M1249.3,207.3 L1348,232.4" stroke="#d6c25a" stroke-width="1.1" fill="none"/>
<path d="M1228.5,222.5 L1299.4,275.1" stroke="#dc5e60" stroke-width="1.1" fill="none"/>
<path d="M1060.3,349.7 L1204,331.5" stroke="#dc5e60" stroke-width="1.1" fill="none"/>
<path d="M1060.3,356.9 L1209.8,331.29999999999995" stroke="#de8a52" stroke-width="1.1" fill="none"/>
<path d="M1248.5,334.5 L1490.0,315.7" stroke="#dc5e60" stroke-width="1.1" fill="none"/>
<path d="M1254.3,334.5 L1499.2,318.5" stroke="#de8a52" stroke-width="1.1" fill="none"/>
<path d="M1254.3,340.29999999999995 L1509.2,320.3" stroke="#d6c25a" stroke-width="1.1" fill="none"/>
<path d="M1248.5,346.2 L1353,366.4" stroke="#dc5e60" stroke-width="1.1" fill="none"/>
<path d="M1254.3,346.2 L1353,371.7" stroke="#de8a52" stroke-width="1.1" fill="none"/>
<path d="M1254.3,352.0 L1353,377.1" stroke="#d6c25a" stroke-width="1.1" fill="none"/>
<path d="M1233.5,367.2 L1304.4,419.8" stroke="#dc5e60" stroke-width="1.1" fill="none"/>
<path d="M1065.3,504 L1209,485.8" stroke="#dc5e60" stroke-width="1.1" fill="none"/>
<path d="M1065.3,511.2 L1214.8,485.6" stroke="#de8a52" stroke-width="1.1" fill="none"/>
<path d="M1253.5,488.8 L1495.0,470.2" stroke="#dc5e60" stroke-width="1.1" fill="none"/>
<path d="M1259.3,488.8 L1504.2,473.0" stroke="#de8a52" stroke-width="1.1" fill="none"/>
<path d="M1259.3,494.6 L1514.2,474.8" stroke="#d6c25a" stroke-width="1.1" fill="none"/>
<path d="M1253.5,500.5 L1358,520.7" stroke="#dc5e60" stroke-width="1.1" fill="none"/>
<path d="M1259.3,500.5 L1358,526" stroke="#de8a52" stroke-width="1.1" fill="none"/>
<path d="M1259.3,506.3 L1358,531.4" stroke="#d6c25a" stroke-width="1.1" fill="none"/>
<path d="M1238.5,521.5 L1309.4,574.1" stroke="#dc5e60" stroke-width="1.1" fill="none"/>
<path d="M532.7,612.4 L583.5,586.3" stroke="#de8a52" stroke-width="1.1" fill="none"/>
<path d="M532.7,619.2 L583.5,592.3" stroke="#dc5e60" stroke-width="1.1" fill="none"/>
<path d="M532.7,641.3 L583.5,631.2" stroke="#de8a52" stroke-width="1.1" fill="none"/>
<path d="M532.7,646.4 L583.5,636.6" stroke="#dc5e60" stroke-width="1.1" fill="none"/>
<path d="M532.7,653.4 L583.5,672.9" stroke="#de8a52" stroke-width="1.1" fill="none"/>
<path d="M532.7,658.5 L583.5,679.2" stroke="#dc5e60" stroke-width="1.1" fill="none"/>
<path d="M490.5,674.9 C478,720 395,800 388.4,856.7" stroke="#dc5e60" stroke-width="1.1" fill="none"/>
<path d="M490.5,668.8 C498,720 470,820 480,856.7" stroke="#dc5e60" stroke-width="1.1" fill="none"/>
<path d="M490.5,658 C505,720 550,790 571.6,856.7" stroke="#dc5e60" stroke-width="1.1" fill="none"/>
<path d="M490.5,652.7 C540,720 600,780 663.2,856.7" stroke="#dc5e60" stroke-width="1.1" fill="none"/>
<path d="M936.3,616.7 L967.5,631.5" stroke="#dc5e60" stroke-width="1.1" fill="none"/>
<path d="M936.3,655 L967.5,641.5" stroke="#dc5e60" stroke-width="1.1" fill="none"/>
<path d="M936.3,693.5 C945,680 960,660 967.5,647" stroke="#dc5e60" stroke-width="1.1" fill="none"/>
<path d="M1000.3,628.9 L1020.5,643.5" stroke="#dc5e60" stroke-width="1.1" fill="none"/>
<path d="M986.6,662.9 L1029.4,771.2" stroke="#dc5e60" stroke-width="1.1" fill="none"/>
<path d="M991.5,662.9 L1029.4,737.3" stroke="#dc5e60" stroke-width="1.1" fill="none"/>
<path d="M996.4,662.9 L1029.4,703.7" stroke="#dc5e60" stroke-width="1.1" fill="none"/>
<rect x="859.1999999999999" y="271.2" width="94.7" height="46.0" rx="2.5" fill="#666666" stroke="#72c27c" stroke-width="1.6"/>
<text x="906.55" y="277.4" font-family="Liberation Serif" font-size="6" fill="#e6e6e6" text-anchor="middle">uartsub0</text>
<rect x="860.85" y="294.55" width="3.70" height="3.70" fill="#000" stroke="#f2f000" stroke-width="1.3"/>
<text x="867.9" y="297.59999999999997" font-family="Liberation Serif" font-size="6.3" fill="#e6e6e6">rx</text>
<rect x="860.85" y="301.80" width="3.70" height="3.70" fill="#000" stroke="#f2f000" stroke-width="1.3"/>
<text x="867.9" y="304.84999999999997" font-family="Liberation Serif" font-size="6.3" fill="#e6e6e6">tx</text>
<rect x="860.85" y="309.05" width="3.70" height="3.70" fill="#000" stroke="#f2f000" stroke-width="1.3"/>
<text x="867.9" y="312.09999999999997" font-family="Liberation Serif" font-size="6.3" fill="#e6e6e6">tx_enable</text>
<rect x="948.65" y="294.55" width="3.70" height="3.70" fill="#000" stroke="#f2f000" stroke-width="1.3"/>
<text x="945.1999999999999" y="297.0" font-family="Liberation Serif" font-size="6" fill="#e6e6e6" text-anchor="end">SAT:OUT</text>
<rect x="859.1999999999999" y="319.40000000000003" width="94.7" height="46.0" rx="2.5" fill="#666666" stroke="#72c27c" stroke-width="1.6"/>
<text x="906.55" y="325.6" font-family="Liberation Serif" font-size="6" fill="#e6e6e6" text-anchor="middle">uartsub1</text>
<rect x="860.85" y="342.75" width="3.70" height="3.70" fill="#000" stroke="#f2f000" stroke-width="1.3"/>
<text x="867.9" y="345.8" font-family="Liberation Serif" font-size="6.3" fill="#e6e6e6">rx</text>
<rect x="860.85" y="350.00" width="3.70" height="3.70" fill="#000" stroke="#f2f000" stroke-width="1.3"/>
<text x="867.9" y="353.05" font-family="Liberation Serif" font-size="6.3" fill="#e6e6e6">tx</text>
<rect x="860.85" y="357.25" width="3.70" height="3.70" fill="#000" stroke="#f2f000" stroke-width="1.3"/>
<text x="867.9" y="360.3" font-family="Liberation Serif" font-size="6.3" fill="#e6e6e6">tx_enable</text>
<rect x="948.65" y="342.75" width="3.70" height="3.70" fill="#000" stroke="#f2f000" stroke-width="1.3"/>
<text x="945.1999999999999" y="345.20000000000005" font-family="Liberation Serif" font-size="6" fill="#e6e6e6" text-anchor="end">SAT:OUT</text>
<rect x="859.1999999999999" y="367.8" width="94.7" height="46.0" rx="2.5" fill="#666666" stroke="#72c27c" stroke-width="1.6"/>
<text x="906.55" y="374.0" font-family="Liberation Serif" font-size="6" fill="#e6e6e6" text-anchor="middle">uartsub2</text>
<rect x="860.85" y="391.15" width="3.70" height="3.70" fill="#000" stroke="#f2f000" stroke-width="1.3"/>
<text x="867.9" y="394.2" font-family="Liberation Serif" font-size="6.3" fill="#e6e6e6">rx</text>
<rect x="860.85" y="398.40" width="3.70" height="3.70" fill="#000" stroke="#f2f000" stroke-width="1.3"/>
<text x="867.9" y="401.45" font-family="Liberation Serif" font-size="6.3" fill="#e6e6e6">tx</text>
<rect x="860.85" y="405.65" width="3.70" height="3.70" fill="#000" stroke="#f2f000" stroke-width="1.3"/>
<text x="867.9" y="408.7" font-family="Liberation Serif" font-size="6.3" fill="#e6e6e6">tx_enable</text>
<rect x="948.65" y="391.15" width="3.70" height="3.70" fill="#000" stroke="#f2f000" stroke-width="1.3"/>
<text x="945.1999999999999" y="393.6" font-family="Liberation Serif" font-size="6" fill="#e6e6e6" text-anchor="end">SAT:OUT</text>
<rect x="642.3" y="425.40000000000003" width="94.7" height="46.0" rx="2.5" fill="#666666" stroke="#72c27c" stroke-width="1.6"/>
<text x="689.65" y="431.6" font-family="Liberation Serif" font-size="6" fill="#e6e6e6" text-anchor="middle">uartsub4</text>
<rect x="643.95" y="448.75" width="3.70" height="3.70" fill="#000" stroke="#f2f000" stroke-width="1.3"/>
<text x="651.0" y="451.8" font-family="Liberation Serif" font-size="6.3" fill="#e6e6e6">rx</text>
<rect x="643.95" y="456.00" width="3.70" height="3.70" fill="#000" stroke="#f2f000" stroke-width="1.3"/>
<text x="651.0" y="459.05" font-family="Liberation Serif" font-size="6.3" fill="#e6e6e6">tx</text>
<rect x="643.95" y="463.25" width="3.70" height="3.70" fill="#000" stroke="#f2f000" stroke-width="1.3"/>
<text x="651.0" y="466.3" font-family="Liberation Serif" font-size="6.3" fill="#e6e6e6">tx_enable</text>
<rect x="731.75" y="448.75" width="3.70" height="3.70" fill="#000" stroke="#f2f000" stroke-width="1.3"/>
<text x="728.3" y="451.20000000000005" font-family="Liberation Serif" font-size="6" fill="#e6e6e6" text-anchor="end">SAT:OUT</text>
<rect x="753.0999999999999" y="425.40000000000003" width="94.7" height="46.0" rx="2.5" fill="#666666" stroke="#72c27c" stroke-width="1.6"/>
<text x="800.4499999999999" y="431.6" font-family="Liberation Serif" font-size="6" fill="#e6e6e6" text-anchor="middle">uartsub3</text>
<rect x="754.75" y="448.75" width="3.70" height="3.70" fill="#000" stroke="#f2f000" stroke-width="1.3"/>
<text x="761.8" y="451.8" font-family="Liberation Serif" font-size="6.3" fill="#e6e6e6">rx</text>
<rect x="754.75" y="456.00" width="3.70" height="3.70" fill="#000" stroke="#f2f000" stroke-width="1.3"/>
<text x="761.8" y="459.05" font-family="Liberation Serif" font-size="6.3" fill="#e6e6e6">tx</text>
<rect x="754.75" y="463.25" width="3.70" height="3.70" fill="#000" stroke="#f2f000" stroke-width="1.3"/>
<text x="761.8" y="466.3" font-family="Liberation Serif" font-size="6.3" fill="#e6e6e6">tx_enable</text>
<rect x="842.55" y="448.75" width="3.70" height="3.70" fill="#000" stroke="#f2f000" stroke-width="1.3"/>
<text x="839.0999999999999" y="451.20000000000005" font-family="Liberation Serif" font-size="6" fill="#e6e6e6" text-anchor="end">SAT:OUT</text>
<rect x="1052.1" y="179.4" width="94.7" height="51.4" rx="2.5" fill="#666666" stroke="#72c27c" stroke-width="1.6"/>
<text x="1099.45" y="185.6" font-family="Liberation Serif" font-size="6" fill="#e6e6e6" text-anchor="middle">uart0</text>
<rect x="1053.75" y="202.75" width="3.70" height="3.70" fill="#000" stroke="#f2f000" stroke-width="1.3"/>
<text x="1060.8" y="205.79999999999998" font-family="Liberation Serif" font-size="6.3" fill="#e6e6e6">rx</text>
<rect x="1053.75" y="210.00" width="3.70" height="3.70" fill="#000" stroke="#f2f000" stroke-width="1.3"/>
<text x="1060.8" y="213.04999999999998" font-family="Liberation Serif" font-size="6.3" fill="#e6e6e6">tx</text>
<rect x="1053.75" y="217.25" width="3.70" height="3.70" fill="#000" stroke="#f2f000" stroke-width="1.3"/>
<text x="1060.8" y="220.29999999999998" font-family="Liberation Serif" font-size="6.3" fill="#e6e6e6">tx_enable</text>
<rect x="1053.75" y="224.50" width="3.70" height="3.70" fill="#000" stroke="#f2f000" stroke-width="1.3"/>
<text x="1060.8" y="227.54999999999998" font-family="Liberation Serif" font-size="6.8" fill="#e6e6e6">SAT</text>
<rect x="1057.1" y="324.09999999999997" width="94.7" height="51.4" rx="2.5" fill="#666666" stroke="#72c27c" stroke-width="1.6"/>
<text x="1104.45" y="330.29999999999995" font-family="Liberation Serif" font-size="6" fill="#e6e6e6" text-anchor="middle">uart1</text>
<rect x="1058.75" y="347.45" width="3.70" height="3.70" fill="#000" stroke="#f2f000" stroke-width="1.3"/>
<text x="1065.8" y="350.49999999999994" font-family="Liberation Serif" font-size="6.3" fill="#e6e6e6">rx</text>
<rect x="1058.75" y="354.70" width="3.70" height="3.70" fill="#000" stroke="#f2f000" stroke-width="1.3"/>
<text x="1065.8" y="357.74999999999994" font-family="Liberation Serif" font-size="6.3" fill="#e6e6e6">tx</text>
<rect x="1058.75" y="361.95" width="3.70" height="3.70" fill="#000" stroke="#f2f000" stroke-width="1.3"/>
<text x="1065.8" y="364.99999999999994" font-family="Liberation Serif" font-size="6.3" fill="#e6e6e6">tx_enable</text>
<rect x="1058.75" y="369.20" width="3.70" height="3.70" fill="#000" stroke="#f2f000" stroke-width="1.3"/>
<text x="1065.8" y="372.24999999999994" font-family="Liberation Serif" font-size="6.8" fill="#e6e6e6">SAT</text>
<rect x="1062.1" y="478.40000000000003" width="94.7" height="51.4" rx="2.5" fill="#666666" stroke="#72c27c" stroke-width="1.6"/>
<text x="1109.45" y="484.6" font-family="Liberation Serif" font-size="6" fill="#e6e6e6" text-anchor="middle">uart2</text>
<rect x="1063.75" y="501.75" width="3.70" height="3.70" fill="#000" stroke="#f2f000" stroke-width="1.3"/>
<text x="1070.8" y="504.8" font-family="Liberation Serif" font-size="6.3" fill="#e6e6e6">rx</text>
<rect x="1063.75" y="509.00" width="3.70" height="3.70" fill="#000" stroke="#f2f000" stroke-width="1.3"/>
<text x="1070.8" y="512.0500000000001" font-family="Liberation Serif" font-size="6.3" fill="#e6e6e6">tx</text>
<rect x="1063.75" y="516.25" width="3.70" height="3.70" fill="#000" stroke="#f2f000" stroke-width="1.3"/>
<text x="1070.8" y="519.3000000000001" font-family="Liberation Serif" font-size="6.3" fill="#e6e6e6">tx_enable</text>
<rect x="1063.75" y="523.50" width="3.70" height="3.70" fill="#000" stroke="#f2f000" stroke-width="1.3"/>
<text x="1070.8" y="526.5500000000001" font-family="Liberation Serif" font-size="6.8" fill="#e6e6e6">SAT</text>
<rect x="1497.65" y="154.85" width="3.70" height="3.70" fill="#000" stroke="#f2f000" stroke-width="1.3"/>
<rect x="1506.85" y="157.65" width="3.70" height="3.70" fill="#000" stroke="#f2f000" stroke-width="1.3"/>
<rect x="1516.85" y="159.45" width="3.70" height="3.70" fill="#000" stroke="#f2f000" stroke-width="1.3"/>
<rect x="1346.15" y="219.85" width="3.70" height="3.70" fill="#000" stroke="#f2f000" stroke-width="1.3"/>
<rect x="1346.15" y="225.15" width="3.70" height="3.70" fill="#000" stroke="#f2f000" stroke-width="1.3"/>
<rect x="1346.15" y="230.55" width="3.70" height="3.70" fill="#000" stroke="#f2f000" stroke-width="1.3"/>
<rect x="1297.55" y="273.25" width="3.70" height="3.70" fill="#000" stroke="#f2f000" stroke-width="1.3"/>
<rect x="1488.15" y="313.85" width="3.70" height="3.70" fill="#000" stroke="#f2f000" stroke-width="1.3"/>
<rect x="1497.35" y="316.65" width="3.70" height="3.70" fill="#000" stroke="#f2f000" stroke-width="1.3"/>
<rect x="1507.35" y="318.45" width="3.70" height="3.70" fill="#000" stroke="#f2f000" stroke-width="1.3"/>
<rect x="1351.15" y="364.55" width="3.70" height="3.70" fill="#000" stroke="#f2f000" stroke-width="1.3"/>
<rect x="1351.15" y="369.85" width="3.70" height="3.70" fill="#000" stroke="#f2f000" stroke-width="1.3"/>
<rect x="1351.15" y="375.25" width="3.70" height="3.70" fill="#000" stroke="#f2f000" stroke-width="1.3"/>
<rect x="1302.55" y="417.95" width="3.70" height="3.70" fill="#000" stroke="#f2f000" stroke-width="1.3"/>
<rect x="1493.15" y="468.35" width="3.70" height="3.70" fill="#000" stroke="#f2f000" stroke-width="1.3"/>
<rect x="1502.35" y="471.15" width="3.70" height="3.70" fill="#000" stroke="#f2f000" stroke-width="1.3"/>
<rect x="1512.35" y="472.95" width="3.70" height="3.70" fill="#000" stroke="#f2f000" stroke-width="1.3"/>
<rect x="1356.15" y="518.85" width="3.70" height="3.70" fill="#000" stroke="#f2f000" stroke-width="1.3"/>
<rect x="1356.15" y="524.15" width="3.70" height="3.70" fill="#000" stroke="#f2f000" stroke-width="1.3"/>
<rect x="1356.15" y="529.55" width="3.70" height="3.70" fill="#000" stroke="#f2f000" stroke-width="1.3"/>
<rect x="1307.55" y="572.25" width="3.70" height="3.70" fill="#000" stroke="#f2f000" stroke-width="1.3"/>
<rect x="722.35" y="226.45" width="3.70" height="3.70" fill="#000" stroke="#f2f000" stroke-width="1.3"/>
<rect x="386.80" y="855.10" width="3.20" height="3.20" fill="#000" stroke="#f2f000" stroke-width="1.1"/>
<rect x="478.40" y="855.10" width="3.20" height="3.20" fill="#000" stroke="#f2f000" stroke-width="1.1"/>
<rect x="570.00" y="855.10" width="3.20" height="3.20" fill="#000" stroke="#f2f000" stroke-width="1.1"/>
<rect x="661.60" y="855.10" width="3.20" height="3.20" fill="#000" stroke="#f2f000" stroke-width="1.1"/>
<rect x="934.45" y="614.85" width="3.70" height="3.70" fill="#000" stroke="#f2f000" stroke-width="1.3"/>
<rect x="934.45" y="653.15" width="3.70" height="3.70" fill="#000" stroke="#f2f000" stroke-width="1.3"/>
<rect x="934.45" y="691.65" width="3.70" height="3.70" fill="#000" stroke="#f2f000" stroke-width="1.3"/>
<rect x="1018.65" y="641.65" width="3.70" height="3.70" fill="#000" stroke="#f2f000" stroke-width="1.3"/>
<rect x="1027.55" y="701.85" width="3.70" height="3.70" fill="#000" stroke="#f2f000" stroke-width="1.3"/>
<rect x="1027.55" y="735.45" width="3.70" height="3.70" fill="#000" stroke="#f2f000" stroke-width="1.3"/>
<rect x="1027.55" y="769.35" width="3.70" height="3.70" fill="#000" stroke="#f2f000" stroke-width="1.3"/>
</svg>
<!-- canvas scrollbars -->
<div class="a sb" style="left:1667px;top:108px;width:14px;height:906px;border-left:1px solid #c4c4c4"></div>
<div class="a btn" style="left:1667px;top:108px;width:14px;height:14px;border-left:1px solid #c4c4c4;border-bottom:1px solid #cfcfcf"><svg class="a" style="left:3px;top:4px" width="8" height="5"><path d="M0 4.5 L4 0.5 L8 4.5Z" fill="#555"/></svg></div>
<div class="a" style="left:1667px;top:486px;width:14px;height:139px;background:linear-gradient(90deg,#fefefe,#f3f3f3);border-left:1px solid #c4c4c4;border-top:1px solid #cfcfcf;border-bottom:1px solid #cfcfcf"></div>
<div class="a btn" style="left:1667px;top:1000px;width:14px;height:14px;border-left:1px solid #c4c4c4;border-top:1px solid #cfcfcf"><svg class="a" style="left:3px;top:3.5px" width="8" height="5"><path d="M0 0.5 L4 4.5 L8 0.5Z" fill="#555"/></svg></div>
<div class="a sb" style="left:259px;top:1014px;width:1408px;height:14px;border-top:1px solid #c4c4c4"></div>
<div class="a btn" style="left:259px;top:1014px;width:14px;height:14px;border-top:1px solid #c4c4c4;border-right:1px solid #cfcfcf;background:linear-gradient(#fdfdfd,#f0f0f0)"><svg class="a" style="left:4px;top:2px" width="5" height="8"><path d="M4.5 0 L0.5 4 L4.5 8Z" fill="#555"/></svg></div>
<div class="a" style="left:873px;top:1014px;width:338px;height:14px;background:linear-gradient(#fefefe,#f3f3f3);border:1px solid #cfcfcf;border-top:1px solid #c4c4c4"></div>
<div class="a btn" style="left:1653px;top:1014px;width:14px;height:14px;border-top:1px solid #c4c4c4;border-left:1px solid #cfcfcf;background:linear-gradient(#fdfdfd,#f0f0f0)"><svg class="a" style="left:4px;top:2px" width="5" height="8"><path d="M0.5 0 L4.5 4 L0.5 8Z" fill="#555"/></svg></div>
<div class="a" style="left:1667px;top:1014px;width:14px;height:14px;background:#f4f4f4;border-left:1px solid #cfcfcf;border-top:1px solid #cfcfcf"></div>
<div class="a" style="left:1681px;top:108px;width:1px;height:921px;background:#c4c4c4"></div>
<!-- right panel -->
<div id="info" class="a">node: board0<br>port: PMOD1B:P8<br>Pin: board0:36<br>Direction: all<br>Type: ['FPGA']<br>Comment: all</div>
<div id="info2" class="a"></div>
<svg class="a" style="left:1683px;top:562px" width="3" height="18"><path d="M1.5 1 V17" stroke="#aaa" stroke-width="1" stroke-dasharray="1 2"/></svg>
<svg class="a" style="left:256px;top:562px" width="3" height="18"><path d="M1.5 1 V17" stroke="#aaa" stroke-width="1" stroke-dasharray="1 2"/></svg>
</body></html>
